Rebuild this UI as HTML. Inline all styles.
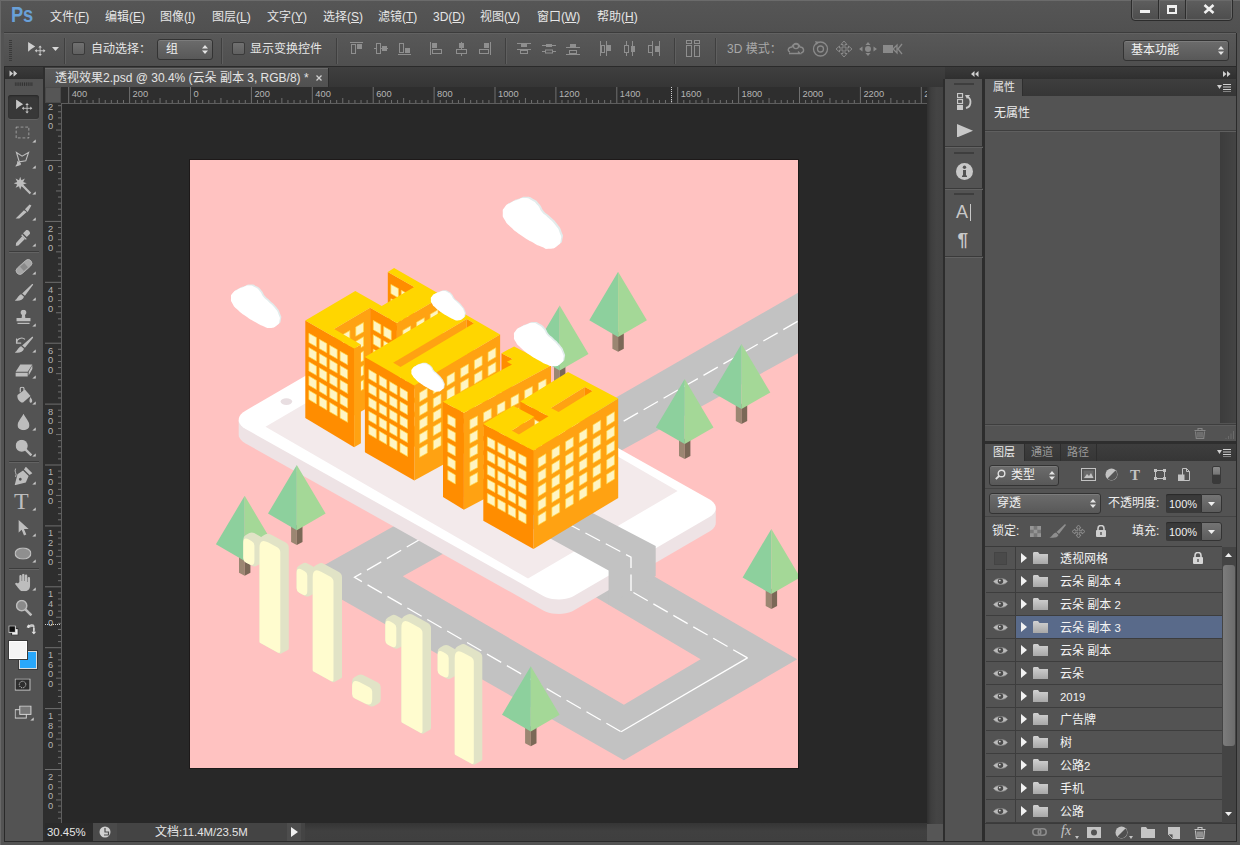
<!DOCTYPE html><html lang="zh"><head><meta charset="utf-8"><title>Photoshop</title><style>
html,body{margin:0;padding:0;background:#535353}
body{width:1240px;height:845px;overflow:hidden;position:relative;font-family:"Liberation Sans","Noto Sans CJK SC",sans-serif}
#app{position:absolute;left:0;top:0;width:1240px;height:845px;overflow:hidden}
.t{position:absolute;white-space:nowrap;line-height:1.34;font-family:"Liberation Sans","Noto Sans CJK SC",sans-serif}
.t u{text-decoration:underline;text-underline-offset:1px}
.la{font-size:.95em}
.rl{font-size:9.3px;color:#b4b4b4;line-height:12px}
</style></head><body><div id="app"><div style="position:absolute;left:0px;top:0px;width:1240px;height:845px;background:#535353;"></div><div style="position:absolute;left:0px;top:0px;width:1240px;height:33px;background:linear-gradient(#565656,#505050);"></div><div style="position:absolute;left:0px;top:0px;width:1240px;height:1px;background:#6b6b6b;"></div><div style="position:absolute;left:0px;top:0px;width:1px;height:845px;background:#686868;"></div><div class="t" style="left:11px;top:2.5px;font-size:21.5px;font-weight:bold;color:#69a0d8;letter-spacing:-0.2px;line-height:24px;transform:scaleX(.85);transform-origin:0 0">Ps</div><div class="t " style="left:50px;top:9px;font-size:12px;color:#e6e6e6;">文件(<u>F</u>)</div><div class="t " style="left:105px;top:9px;font-size:12px;color:#e6e6e6;">编辑(<u>E</u>)</div><div class="t " style="left:160px;top:9px;font-size:12px;color:#e6e6e6;">图像(<u>I</u>)</div><div class="t " style="left:212px;top:9px;font-size:12px;color:#e6e6e6;">图层(<u>L</u>)</div><div class="t " style="left:267px;top:9px;font-size:12px;color:#e6e6e6;">文字(<u>Y</u>)</div><div class="t " style="left:323px;top:9px;font-size:12px;color:#e6e6e6;">选择(<u>S</u>)</div><div class="t " style="left:378px;top:9px;font-size:12px;color:#e6e6e6;">滤镜(<u>T</u>)</div><div class="t " style="left:433px;top:9px;font-size:12px;color:#e6e6e6;">3D(<u>D</u>)</div><div class="t " style="left:480px;top:9px;font-size:12px;color:#e6e6e6;">视图(<u>V</u>)</div><div class="t " style="left:537px;top:9px;font-size:12px;color:#e6e6e6;">窗口(<u>W</u>)</div><div class="t " style="left:597px;top:9px;font-size:12px;color:#e6e6e6;">帮助(<u>H</u>)</div><div style="position:absolute;left:1131px;top:-1px;width:100px;height:20px;border:1px solid #2c2c2c;border-radius:0 0 4px 4px;background:linear-gradient(#5e5e5e,#4d4d4d);box-shadow:inset 0 0 0 1px #6a6a6a"></div><div style="position:absolute;left:1158px;top:0px;width:1px;height:19px;background:#2c2c2c;"></div><div style="position:absolute;left:1159px;top:0px;width:1px;height:19px;background:#686868;"></div><div style="position:absolute;left:1185px;top:0px;width:1px;height:19px;background:#2c2c2c;"></div><div style="position:absolute;left:1186px;top:0px;width:1px;height:19px;background:#686868;"></div><div style="position:absolute;left:1140px;top:10px;width:10px;height:3px;background:#f0f0f0;"></div><div style="position:absolute;left:1167px;top:5px;width:6px;height:4px;border:2px solid #f0f0f0;border-top-width:3px"></div><svg style="position:absolute;left:1203px;top:4px;" width="12" height="10" viewBox="0 0 12 10"><path d="M1.5 1 L10.5 9 M10.5 1 L1.5 9" stroke="#f0f0f0" stroke-width="2.6" fill="none"/></svg><div style="position:absolute;left:4px;top:32px;width:1232px;height:1px;background:#3c3c3c;"></div><div style="position:absolute;left:4px;top:33px;width:1232px;height:1px;background:#626262;"></div><div style="position:absolute;left:4px;top:34px;width:1232px;height:32px;background:linear-gradient(#585858,#4f4f4f);"></div><div style="position:absolute;left:4px;top:66px;width:1232px;height:1px;background:#2a2a2a;"></div><svg style="position:absolute;left:9px;top:40px;" width="4" height="21" viewBox="0 0 4 21"><rect x="0" y="0" width="3" height="1" fill="#3a3a3a"/><rect x="0" y="2" width="3" height="1" fill="#3a3a3a"/><rect x="0" y="4" width="3" height="1" fill="#3a3a3a"/><rect x="0" y="6" width="3" height="1" fill="#3a3a3a"/><rect x="0" y="8" width="3" height="1" fill="#3a3a3a"/><rect x="0" y="10" width="3" height="1" fill="#3a3a3a"/><rect x="0" y="12" width="3" height="1" fill="#3a3a3a"/><rect x="0" y="14" width="3" height="1" fill="#3a3a3a"/><rect x="0" y="16" width="3" height="1" fill="#3a3a3a"/><rect x="0" y="18" width="3" height="1" fill="#3a3a3a"/><rect x="0" y="20" width="3" height="1" fill="#3a3a3a"/></svg><svg style="position:absolute;left:26px;top:41px;" width="22" height="16" viewBox="0 0 22 18"><path d="M1 1 L1 12 L4.2 9.2 L9 6.2 Z" fill="#cfcfcf"/><path d="M14.5 6.5v9M10 11h9" stroke="#cfcfcf" stroke-width="1" fill="none"/><path d="M14.5 5l-2 2.3h4zM14.5 17l-2-2.3h4zM8.5 11l2.3-2v4zM20.5 11l-2.3-2v4z" fill="#cfcfcf"/></svg><svg style="position:absolute;left:52px;top:47px;" width="7" height="4" viewBox="0 0 7 4"><path d="M0 0h7L3.5 4z" fill="#d8d8d8"/></svg><div style="position:absolute;left:64px;top:38px;width:1px;height:26px;background:#3f3f3f;"></div><div style="position:absolute;left:65px;top:38px;width:1px;height:26px;background:#5f5f5f;"></div><div style="position:absolute;left:72px;top:42px;width:11px;height:11px;border:1px solid #3a3a3a;border-radius:2px;background:linear-gradient(#717171,#606060)"></div><div class="t " style="left:91px;top:41px;font-size:12px;color:#e6e6e6;">自动选择：</div><div style="position:absolute;left:157px;top:39px;width:54px;height:19px;border:1px solid #333;border-radius:3px;background:linear-gradient(#6c6c6c,#585858);box-shadow:inset 0 1px 0 #7c7c7c"></div><div class="t " style="left:166px;top:41px;font-size:12px;color:#f0f0f0;">组</div><svg style="position:absolute;left:202px;top:45px;" width="6" height="9" viewBox="0 0 6 9"><path d="M0 3.500L3 0 6 3.500zM0 5.500L3 9 6 5.500z" fill="#e4e4e4"/></svg><div style="position:absolute;left:221px;top:38px;width:1px;height:26px;background:#3f3f3f;"></div><div style="position:absolute;left:222px;top:38px;width:1px;height:26px;background:#5f5f5f;"></div><div style="position:absolute;left:232px;top:42px;width:11px;height:11px;border:1px solid #3a3a3a;border-radius:2px;background:linear-gradient(#717171,#606060)"></div><div class="t " style="left:250px;top:41px;font-size:12px;color:#e6e6e6;">显示变换控件</div><div style="position:absolute;left:336px;top:38px;width:1px;height:26px;background:#3f3f3f;"></div><div style="position:absolute;left:337px;top:38px;width:1px;height:26px;background:#5f5f5f;"></div><svg style="position:absolute;left:350px;top:42px;" width="14" height="14" viewBox="0 0 14 14"><path d="M0 .5h13" stroke="#8f8f8f"/><rect x="1.5" y="2.5" width="4" height="9" fill="none" stroke="#8f8f8f"/><rect x="7" y="2" width="5" height="5" fill="#8f8f8f"/></svg><svg style="position:absolute;left:374px;top:42px;" width="14" height="14" viewBox="0 0 14 14"><path d="M0 6.5h14" stroke="#8f8f8f"/><rect x="2.5" y="1.5" width="4" height="10" fill="#535353" stroke="#8f8f8f"/><rect x="8" y="4" width="5" height="5" fill="#8f8f8f"/></svg><svg style="position:absolute;left:398px;top:42px;" width="14" height="14" viewBox="0 0 14 14"><path d="M0 12.5h13" stroke="#8f8f8f"/><rect x="1.5" y="1.5" width="4" height="9" fill="none" stroke="#8f8f8f"/><rect x="7" y="6" width="5" height="5" fill="#8f8f8f"/></svg><svg style="position:absolute;left:430px;top:42px;" width="14" height="14" viewBox="0 0 14 14"><path d="M.5 0v13" stroke="#8f8f8f"/><rect x="2" y="1" width="5" height="5" fill="#8f8f8f"/><rect x="2.5" y="7.5" width="9" height="4" fill="none" stroke="#8f8f8f"/></svg><svg style="position:absolute;left:455px;top:42px;" width="14" height="14" viewBox="0 0 14 14"><path d="M6.5 0v14" stroke="#8f8f8f"/><rect x="4" y="1" width="5" height="5" fill="#8f8f8f"/><rect x="1.5" y="7.5" width="10" height="4" fill="#535353" stroke="#8f8f8f"/></svg><svg style="position:absolute;left:478px;top:42px;" width="14" height="14" viewBox="0 0 14 14"><path d="M12.5 0v13" stroke="#8f8f8f"/><rect x="6" y="1" width="5" height="5" fill="#8f8f8f"/><rect x="1.5" y="7.5" width="9" height="4" fill="none" stroke="#8f8f8f"/></svg><div style="position:absolute;left:505px;top:38px;width:1px;height:26px;background:#3f3f3f;"></div><div style="position:absolute;left:506px;top:38px;width:1px;height:26px;background:#5f5f5f;"></div><svg style="position:absolute;left:517px;top:42px;" width="14" height="14" viewBox="0 0 14 14"><path d="M0 1.5h14M0 7.5h14" stroke="#8f8f8f"/><rect x="4" y="2" width="6" height="3" fill="#8f8f8f"/><rect x="3.5" y="8.5" width="7" height="3" fill="none" stroke="#8f8f8f"/></svg><svg style="position:absolute;left:542px;top:42px;" width="14" height="14" viewBox="0 0 14 14"><path d="M0 3.5h14M0 9.5h14" stroke="#8f8f8f"/><rect x="4" y="2" width="6" height="3" fill="#8f8f8f"/><rect x="3.5" y="8" width="7" height="3" fill="#535353" stroke="#8f8f8f"/></svg><svg style="position:absolute;left:566px;top:42px;" width="14" height="14" viewBox="0 0 14 14"><path d="M0 5.5h14M0 12.5h14" stroke="#8f8f8f"/><rect x="4" y="2" width="6" height="3" fill="#8f8f8f"/><rect x="3.5" y="8.5" width="7" height="3" fill="none" stroke="#8f8f8f"/></svg><svg style="position:absolute;left:599px;top:41px;" width="15" height="15" viewBox="0 0 15 15"><path d="M1.5 0v15M7.5 0v15" stroke="#8f8f8f"/><rect x="2" y="4" width="3" height="7" fill="none" stroke="#8f8f8f" transform="translate(.5 .5)"/><rect x="8" y="4" width="4" height="6" fill="#8f8f8f"/></svg><svg style="position:absolute;left:623px;top:41px;" width="15" height="15" viewBox="0 0 15 15"><path d="M3.5 0v15M9.5 0v15" stroke="#8f8f8f"/><rect x="1.5" y="4.5" width="4" height="7" fill="#535353" stroke="#8f8f8f"/><rect x="8" y="5" width="4" height="6" fill="#8f8f8f"/></svg><svg style="position:absolute;left:647px;top:41px;" width="15" height="15" viewBox="0 0 15 15"><path d="M5.5 0v15M12.5 0v15" stroke="#8f8f8f"/><rect x="1.5" y="4.5" width="4" height="7" fill="none" stroke="#8f8f8f"/><rect x="8" y="5" width="4" height="6" fill="#8f8f8f"/></svg><div style="position:absolute;left:674px;top:38px;width:1px;height:26px;background:#3f3f3f;"></div><div style="position:absolute;left:675px;top:38px;width:1px;height:26px;background:#5f5f5f;"></div><svg style="position:absolute;left:686px;top:40px;" width="15" height="18" viewBox="0 0 15 18"><rect x=".5" y=".5" width="5" height="3" fill="none" stroke="#8f8f8f"/><rect x="8.5" y=".5" width="5" height="3" fill="none" stroke="#8f8f8f"/><rect x=".5" y="5.5" width="5" height="11" fill="none" stroke="#8f8f8f"/><rect x="8.5" y="5.5" width="5" height="11" fill="none" stroke="#8f8f8f"/></svg><div style="position:absolute;left:715px;top:38px;width:1px;height:26px;background:#3f3f3f;"></div><div style="position:absolute;left:716px;top:38px;width:1px;height:26px;background:#5f5f5f;"></div><div class="t " style="left:727px;top:41px;font-size:12px;color:#a8a8a8;">3D 模式：</div><svg style="position:absolute;left:787px;top:41px;" width="20" height="15" viewBox="0 0 20 15"><path d="M3 11c-3-1-2-5 2-5 1-4 7-4 8 0 4 0 5 5 1 6M2 12.5h11l-2-2M13 12.5" fill="none" stroke="#8a8a8a" stroke-width="1.4"/><circle cx="9" cy="5" r="2.6" fill="none" stroke="#8a8a8a" stroke-width="1.3"/></svg><svg style="position:absolute;left:812px;top:40px;" width="17" height="17" viewBox="0 0 17 17"><circle cx="8.5" cy="9" r="7" fill="none" stroke="#8a8a8a" stroke-width="1.3"/><circle cx="8.5" cy="9" r="3" fill="none" stroke="#8a8a8a" stroke-width="1.3"/><path d="M3 1l4 1-2.5 3z" fill="#8a8a8a"/></svg><svg style="position:absolute;left:836px;top:41px;" width="16" height="16" viewBox="0 0 16 16"><path d="M8 0l3 3.5H9V7h3.5V5L16 8l-3.5 3V9H9v3.500h2L8 16l-3-3.500h2V9H3.500v2L0 8l3.500-3v2H7V3.500H5z" fill="none" stroke="#8a8a8a" stroke-width="1"/></svg><svg style="position:absolute;left:859px;top:41px;" width="18" height="16" viewBox="0 0 18 16"><path d="M9 1l2.500 3h-5zM9 15l2.500-3h-5zM0 8l3.500-2.500v5zM18 8l-3.500-2.500v5z" fill="#8a8a8a"/><circle cx="9" cy="8" r="3" fill="#8a8a8a"/></svg><svg style="position:absolute;left:883px;top:43px;" width="20" height="12" viewBox="0 0 20 12"><rect x="0" y="2" width="10" height="8" fill="#8a8a8a"/><path d="M10 6l4-4v8zM19 1l-4 5 4 5" fill="none" stroke="#8a8a8a" stroke-width="1.3"/></svg><div style="position:absolute;left:1123px;top:40px;width:104px;height:19px;border:1px solid #333;border-radius:3px;background:linear-gradient(#6c6c6c,#585858);box-shadow:inset 0 1px 0 #7c7c7c"></div><div class="t " style="left:1131px;top:42px;font-size:12px;color:#f0f0f0;">基本功能</div><svg style="position:absolute;left:1218px;top:46px;" width="6" height="9" viewBox="0 0 6 9"><path d="M0 3.500L3 0 6 3.500zM0 5.500L3 9 6 5.500z" fill="#e4e4e4"/></svg><div style="position:absolute;left:4px;top:67px;width:1px;height:774px;background:#2a2a2a;"></div><div style="position:absolute;left:5px;top:67px;width:38px;height:12px;background:linear-gradient(#3b3b3b,#303030);"></div><svg style="position:absolute;left:9px;top:70px;transform:scale(.93);transform-origin:50% 50%;" width="9" height="7" viewBox="0 0 9 7"><path d="M0 0l4 3.5L0 7zM4.500 0l4 3.500-4 3.500z" fill="#cfcfcf"/></svg><div style="position:absolute;left:5px;top:79px;width:38px;height:762px;background:#535353;"></div><div style="position:absolute;left:43px;top:67px;width:2px;height:774px;background:#2e2e2e;"></div><svg style="position:absolute;left:14px;top:82px;transform:scale(.93);transform-origin:50% 50%;" width="20" height="5" viewBox="0 0 20 5"><rect x="0" y="0" width="1" height="4" fill="#2f2f2f"/><rect x="2" y="0" width="1" height="4" fill="#2f2f2f"/><rect x="4" y="0" width="1" height="4" fill="#2f2f2f"/><rect x="6" y="0" width="1" height="4" fill="#2f2f2f"/><rect x="8" y="0" width="1" height="4" fill="#2f2f2f"/><rect x="10" y="0" width="1" height="4" fill="#2f2f2f"/><rect x="12" y="0" width="1" height="4" fill="#2f2f2f"/><rect x="14" y="0" width="1" height="4" fill="#2f2f2f"/><rect x="16" y="0" width="1" height="4" fill="#2f2f2f"/><rect x="18" y="0" width="1" height="4" fill="#2f2f2f"/></svg><div style="position:absolute;left:8px;top:95px;width:31px;height:24px;border-radius:3px;background:#383838;box-shadow:inset 0 1px 2px #262626,0 1px 0 #626262"></div><svg style="position:absolute;left:14px;top:99px;transform:scale(.93);transform-origin:50% 50%;" width="20" height="16" viewBox="0 0 20 17"><path d="M1 0V11l3.200-2.800L9 5.500z" fill="#c6c6c6"/><path d="M13.500 5.500v9M9 10h9" stroke="#c6c6c6" fill="none"/><path d="M13.500 4l-2 2.300h4zM13.500 16l-2-2.300h4zM7.500 10l2.300-2v4zM19.500 10l-2.300-2v4z" fill="#c6c6c6"/></svg><svg style="position:absolute;left:15px;top:126px;transform:scale(.93);transform-origin:50% 50%;" width="15" height="13" viewBox="0 0 15 13"><rect x=".5" y=".5" width="14" height="12" fill="none" stroke="#bdbdbd" stroke-dasharray="3 2"/></svg><svg style="position:absolute;left:32px;top:139px;transform:scale(.93);transform-origin:50% 50%;" width="4" height="4" viewBox="0 0 4 4"><path d="M4 0V4H0z" fill="#c8c8c8"/></svg><svg style="position:absolute;left:14px;top:150px;transform:scale(.93);transform-origin:50% 50%;" width="18" height="18" viewBox="0 0 18 18"><path d="M2 2l6 4 7-4-3 9-7 1zM5 12l-3 4 4-1z" fill="none" stroke="#bdbdbd" stroke-width="1.200"/><path d="M3 11l-1 6 5-3z" fill="#bdbdbd"/></svg><svg style="position:absolute;left:32px;top:165px;transform:scale(.93);transform-origin:50% 50%;" width="4" height="4" viewBox="0 0 4 4"><path d="M4 0V4H0z" fill="#c8c8c8"/></svg><svg style="position:absolute;left:13px;top:176px;transform:scale(.93);transform-origin:50% 50%;" width="20" height="20" viewBox="0 0 20 20"><path d="M9 9l9 9" stroke="#bdbdbd" stroke-width="2.400"/><path d="M7 0l1.300 3.800L12 2l-1.800 3.700L14 7l-3.800 1.300L12 12l-3.700-1.800L7 14l-1.300-3.800L2 12l1.800-3.700L0 7l3.800-1.300L2 2l3.700 1.800z" fill="#bdbdbd"/><circle cx="7" cy="7" r="3" fill="#bdbdbd"/></svg><svg style="position:absolute;left:32px;top:191px;transform:scale(.93);transform-origin:50% 50%;" width="4" height="4" viewBox="0 0 4 4"><path d="M4 0V4H0z" fill="#c8c8c8"/></svg><svg style="position:absolute;left:14px;top:203px;transform:scale(.93);transform-origin:50% 50%;" width="19" height="18" viewBox="0 0 19 18"><path d="M1 16l9-9 3 2-8 7zM11 6l5-5 2 1-4 7z" fill="#bdbdbd"/></svg><svg style="position:absolute;left:32px;top:217px;transform:scale(.93);transform-origin:50% 50%;" width="4" height="4" viewBox="0 0 4 4"><path d="M4 0V4H0z" fill="#c8c8c8"/></svg><svg style="position:absolute;left:15px;top:229px;transform:scale(.93);transform-origin:50% 50%;" width="17" height="18" viewBox="0 0 17 18"><path d="M11 1c2-2 6 2 4 4l-3 3-4-4zM7 5l5 5-1 1-5-5zM7 7l3 3-7 7-3 .500.500-3z" fill="#bdbdbd"/></svg><svg style="position:absolute;left:32px;top:243px;transform:scale(.93);transform-origin:50% 50%;" width="4" height="4" viewBox="0 0 4 4"><path d="M4 0V4H0z" fill="#c8c8c8"/></svg><div style="position:absolute;left:9px;top:251px;width:30px;height:1px;background:#3c3c3c;"></div><div style="position:absolute;left:9px;top:252px;width:30px;height:1px;background:#636363;"></div><svg style="position:absolute;left:14px;top:258px;transform:scale(.93);transform-origin:50% 50%;" width="20" height="18" viewBox="0 0 20 18"><rect x="0" y="5" width="20" height="8" rx="4" fill="#a6a6a6" stroke="#bdbdbd" stroke-width=".8" transform="rotate(-42 10 9)"/><rect x="7" y="6" width="6" height="6" fill="#8a8a8a" transform="rotate(-42 10 9)"/></svg><svg style="position:absolute;left:32px;top:271px;transform:scale(.93);transform-origin:50% 50%;" width="4" height="4" viewBox="0 0 4 4"><path d="M4 0V4H0z" fill="#c8c8c8"/></svg><svg style="position:absolute;left:14px;top:283px;transform:scale(.93);transform-origin:50% 50%;" width="20" height="19" viewBox="0 0 20 19"><path d="M19 0l1 1-9 12-3-2.500zM7 11.500l3 2.500c-1 4-6 5-10 4 3-1 3-5 7-6.500z" fill="#bdbdbd"/></svg><svg style="position:absolute;left:32px;top:297px;transform:scale(.93);transform-origin:50% 50%;" width="4" height="4" viewBox="0 0 4 4"><path d="M4 0V4H0z" fill="#c8c8c8"/></svg><svg style="position:absolute;left:15px;top:309px;transform:scale(.93);transform-origin:50% 50%;" width="17" height="18" viewBox="0 0 17 18"><circle cx="8.500" cy="3" r="3" fill="#bdbdbd"/><path d="M7 5h3l.5 4H16v3.500H1V9h5.500zM2 14h13v1.500H2z" fill="#bdbdbd"/></svg><svg style="position:absolute;left:32px;top:323px;transform:scale(.93);transform-origin:50% 50%;" width="4" height="4" viewBox="0 0 4 4"><path d="M4 0V4H0z" fill="#c8c8c8"/></svg><svg style="position:absolute;left:14px;top:335px;transform:scale(.93);transform-origin:50% 50%;" width="20" height="19" viewBox="0 0 20 19"><path d="M19 1l1 1-9 11-3-2.500zM7 11.500l3 2.500c-1 4-6 5-10 4 3-1 3-5 7-6.500z" fill="#bdbdbd"/><path d="M2 8c0-5 6-7 9-4M2 3v5h5" fill="none" stroke="#bdbdbd" stroke-width="1.300"/></svg><svg style="position:absolute;left:32px;top:349px;transform:scale(.93);transform-origin:50% 50%;" width="4" height="4" viewBox="0 0 4 4"><path d="M4 0V4H0z" fill="#c8c8c8"/></svg><svg style="position:absolute;left:14px;top:362px;transform:scale(.93);transform-origin:50% 50%;" width="20" height="16" viewBox="0 0 20 16"><path d="M6 2h13l-5 8H1zM1 11h13v4H1zM15 10l4-7v4l-4 7z" fill="#bdbdbd"/></svg><svg style="position:absolute;left:32px;top:375px;transform:scale(.93);transform-origin:50% 50%;" width="4" height="4" viewBox="0 0 4 4"><path d="M4 0V4H0z" fill="#c8c8c8"/></svg><svg style="position:absolute;left:14px;top:386px;transform:scale(.93);transform-origin:50% 50%;" width="20" height="19" viewBox="0 0 20 19"><path d="M3 9l8-6 6 7-8 7c-3 1-7-4-6-8z" fill="#bdbdbd"/><path d="M6 6V2c0-2 4-2 4 0v5" fill="none" stroke="#bdbdbd" stroke-width="1.300"/><path d="M17 11c1 2 3 4 1 6-2 1-3-2-1-6z" fill="#bdbdbd"/></svg><svg style="position:absolute;left:32px;top:401px;transform:scale(.93);transform-origin:50% 50%;" width="4" height="4" viewBox="0 0 4 4"><path d="M4 0V4H0z" fill="#c8c8c8"/></svg><svg style="position:absolute;left:17px;top:413px;transform:scale(.93);transform-origin:50% 50%;" width="13" height="18" viewBox="0 0 13 18"><path d="M6.500 0C9 5 13 9 13 12.500a6.500 5.500 0 0 1-13 0C0 9 4 5 6.500 0z" fill="#bdbdbd"/></svg><svg style="position:absolute;left:32px;top:427px;transform:scale(.93);transform-origin:50% 50%;" width="4" height="4" viewBox="0 0 4 4"><path d="M4 0V4H0z" fill="#c8c8c8"/></svg><svg style="position:absolute;left:15px;top:439px;transform:scale(.93);transform-origin:50% 50%;" width="18" height="18" viewBox="0 0 18 18"><circle cx="6.500" cy="6.500" r="6.500" fill="#bdbdbd"/><path d="M10 10l7 7" stroke="#bdbdbd" stroke-width="2.600"/></svg><svg style="position:absolute;left:32px;top:453px;transform:scale(.93);transform-origin:50% 50%;" width="4" height="4" viewBox="0 0 4 4"><path d="M4 0V4H0z" fill="#c8c8c8"/></svg><div style="position:absolute;left:9px;top:461px;width:30px;height:1px;background:#3c3c3c;"></div><div style="position:absolute;left:9px;top:462px;width:30px;height:1px;background:#636363;"></div><svg style="position:absolute;left:13px;top:466px;transform:scale(.93);transform-origin:50% 50%;" width="21" height="20" viewBox="0 0 21 20"><path d="M13 0l7 7-3 2-6-6zM10 4l6 6-3 7-12 3 3-12zM7 12a1.500 1.500 0 1 0 .1 0z" fill="#bdbdbd" fill-rule="evenodd"/><path d="M2 2c-2 4 2 5 0 9" fill="none" stroke="#bdbdbd"/></svg><svg style="position:absolute;left:32px;top:481px;transform:scale(.93);transform-origin:50% 50%;" width="4" height="4" viewBox="0 0 4 4"><path d="M4 0V4H0z" fill="#c8c8c8"/></svg><div class="t" style="left:14px;top:489px;font-size:24px;line-height:24px;font-family:'Liberation Serif',serif;color:#bdbdbd">T</div><svg style="position:absolute;left:32px;top:507px;transform:scale(.93);transform-origin:50% 50%;" width="4" height="4" viewBox="0 0 4 4"><path d="M4 0V4H0z" fill="#c8c8c8"/></svg><svg style="position:absolute;left:18px;top:519px;transform:scale(.93);transform-origin:50% 50%;" width="12" height="18" viewBox="0 0 12 18"><path d="M0 0v14l3.500-3 2.500 6 2.500-1-2.500-6h5z" fill="#bdbdbd"/></svg><svg style="position:absolute;left:32px;top:533px;transform:scale(.93);transform-origin:50% 50%;" width="4" height="4" viewBox="0 0 4 4"><path d="M4 0V4H0z" fill="#c8c8c8"/></svg><svg style="position:absolute;left:14px;top:547px;transform:scale(.93);transform-origin:50% 50%;" width="18" height="13" viewBox="0 0 18 13"><ellipse cx="9" cy="6.500" rx="8.500" ry="6" fill="#8f8f8f" stroke="#bdbdbd" stroke-width="1.500"/></svg><svg style="position:absolute;left:32px;top:559px;transform:scale(.93);transform-origin:50% 50%;" width="4" height="4" viewBox="0 0 4 4"><path d="M4 0V4H0z" fill="#c8c8c8"/></svg><div style="position:absolute;left:9px;top:568px;width:30px;height:1px;background:#3c3c3c;"></div><div style="position:absolute;left:9px;top:569px;width:30px;height:1px;background:#636363;"></div><svg style="position:absolute;left:14px;top:573px;transform:scale(.93);transform-origin:50% 50%;" width="20" height="19" viewBox="0 0 20 19"><path d="M5 9V3c0-2 2.500-2 2.500 0v5h.500V1.500c0-2 2.500-2 2.500 0V8h.500V2.500c0-2 2.500-2 2.500 0V9h.500V5c0-2 2.500-2 2.500 0v8c0 4-3 6-6 6H9c-3 0-4-2-8-7-1.500-2 1-3 2.500-1.500z" fill="#bdbdbd"/></svg><svg style="position:absolute;left:32px;top:587px;transform:scale(.93);transform-origin:50% 50%;" width="4" height="4" viewBox="0 0 4 4"><path d="M4 0V4H0z" fill="#c8c8c8"/></svg><svg style="position:absolute;left:15px;top:599px;transform:scale(.93);transform-origin:50% 50%;" width="18" height="18" viewBox="0 0 18 18"><circle cx="6.500" cy="6.500" r="5.500" fill="#8a8a8a" stroke="#bdbdbd" stroke-width="1.600"/><path d="M10.500 10.500l6.500 6.500" stroke="#bdbdbd" stroke-width="2.800"/></svg><svg style="position:absolute;left:8px;top:625px;transform:scale(.93);transform-origin:50% 50%;" width="11" height="11" viewBox="0 0 11 11"><rect x="3.500" y="3.500" width="7" height="7" fill="#eee" stroke="#222"/><rect x=".5" y=".5" width="7" height="7" fill="#111" stroke="#ddd"/></svg><svg style="position:absolute;left:26px;top:623px;transform:scale(.93);transform-origin:50% 50%;" width="12" height="12" viewBox="0 0 12 12"><path d="M2 5c0-3 3-4 6-3M8 10V5" fill="none" stroke="#ddd" stroke-width="1.400"/><path d="M0 4.500L2 1l2.500 3.500zM5.500 9L8 12l2.500-3z" fill="#ddd"/><path d="M3 3h5v5" fill="none" stroke="#ddd" stroke-width="1.300"/></svg><div style="position:absolute;left:19px;top:651px;width:16px;height:16px;background:#2aa8fb;border:1px solid #dcdcdc;box-shadow:0 0 0 1px #3a3a3a"></div><div style="position:absolute;left:9px;top:641px;width:16px;height:16px;background:#f4f4f4;border:1px solid #fff;box-shadow:0 0 0 1px #3a3a3a"></div><svg style="position:absolute;left:14px;top:678px;transform:scale(.93);transform-origin:50% 50%;" width="18" height="14" viewBox="0 0 18 14"><rect x=".5" y=".5" width="16" height="12" fill="#2e2e2e" stroke="#ccc"/><circle cx="8.500" cy="6.500" r="3.500" fill="none" stroke="#eee" stroke-dasharray="1 1"/></svg><svg style="position:absolute;left:14px;top:705px;transform:scale(.93);transform-origin:50% 50%;" width="19" height="15" viewBox="0 0 19 15"><rect x=".5" y="4.500" width="12" height="9" fill="#555" stroke="#ddd"/><rect x="5.500" y=".5" width="12" height="9" fill="#777" stroke="#ddd"/></svg><svg style="position:absolute;left:30px;top:717px;transform:scale(.93);transform-origin:50% 50%;" width="4" height="4" viewBox="0 0 4 4"><path d="M4 0V4H0z" fill="#c8c8c8"/></svg><div style="position:absolute;left:45px;top:67px;width:900px;height:20px;background:linear-gradient(#3f3f3f,#353535);"></div><div style="position:absolute;left:45px;top:68px;width:283px;height:19px;background:linear-gradient(#5a5a5a,#505050);border-right:1px solid #2c2c2c;box-shadow:inset 0 1px 0 #6a6a6a"></div><div class="t " style="left:55px;top:69.5px;font-size:12px;color:#e4e4e4;">透视效果2.psd @ 30.4% (云朵 副本 3, RGB/8) *</div><svg style="position:absolute;left:315.5px;top:74.5px;" width="6" height="6" viewBox="0 0 6 6"><path d="M.5.5l5 5M5.500.5l-5 5" stroke="#d0d0d0" stroke-width="1.250"/></svg><div style="position:absolute;left:45px;top:87px;width:882px;height:17px;background:#2e2e2e;"></div><div style="position:absolute;left:45px;top:104px;width:17px;height:719px;background:#2e2e2e;"></div><div style="position:absolute;left:45px;top:87px;width:16px;height:16px;background:#565656;box-shadow:inset 0 0 0 1px #4a4a4a"></div><div style="position:absolute;left:61px;top:103px;width:866px;height:1px;background:#5e5e5e;"></div><div style="position:absolute;left:61px;top:103px;width:1px;height:720px;background:#5e5e5e;"></div><div style="position:absolute;left:62px;top:104px;width:865px;height:719px;background:#282828;"></div><svg style="position:absolute;left:45px;top:87px;" width="882" height="16" viewBox="0 0 882 16"><g fill="#6f6f6f"><rect x="23.20" y="0" width="1" height="16"/><rect x="29.29" y="13" width="1" height="3"/><rect x="35.38" y="13" width="1" height="3"/><rect x="41.47" y="13" width="1" height="3"/><rect x="47.56" y="13" width="1" height="3"/><rect x="53.65" y="11" width="1" height="5"/><rect x="59.74" y="13" width="1" height="3"/><rect x="65.83" y="13" width="1" height="3"/><rect x="71.92" y="13" width="1" height="3"/><rect x="78.01" y="13" width="1" height="3"/><rect x="84.10" y="0" width="1" height="16"/><rect x="90.19" y="13" width="1" height="3"/><rect x="96.28" y="13" width="1" height="3"/><rect x="102.37" y="13" width="1" height="3"/><rect x="108.46" y="13" width="1" height="3"/><rect x="114.55" y="11" width="1" height="5"/><rect x="120.64" y="13" width="1" height="3"/><rect x="126.73" y="13" width="1" height="3"/><rect x="132.82" y="13" width="1" height="3"/><rect x="138.91" y="13" width="1" height="3"/><rect x="145.00" y="0" width="1" height="16"/><rect x="151.09" y="13" width="1" height="3"/><rect x="157.18" y="13" width="1" height="3"/><rect x="163.27" y="13" width="1" height="3"/><rect x="169.36" y="13" width="1" height="3"/><rect x="175.45" y="11" width="1" height="5"/><rect x="181.54" y="13" width="1" height="3"/><rect x="187.63" y="13" width="1" height="3"/><rect x="193.72" y="13" width="1" height="3"/><rect x="199.81" y="13" width="1" height="3"/><rect x="205.90" y="0" width="1" height="16"/><rect x="211.99" y="13" width="1" height="3"/><rect x="218.08" y="13" width="1" height="3"/><rect x="224.17" y="13" width="1" height="3"/><rect x="230.26" y="13" width="1" height="3"/><rect x="236.35" y="11" width="1" height="5"/><rect x="242.44" y="13" width="1" height="3"/><rect x="248.53" y="13" width="1" height="3"/><rect x="254.62" y="13" width="1" height="3"/><rect x="260.71" y="13" width="1" height="3"/><rect x="266.80" y="0" width="1" height="16"/><rect x="272.89" y="13" width="1" height="3"/><rect x="278.98" y="13" width="1" height="3"/><rect x="285.07" y="13" width="1" height="3"/><rect x="291.16" y="13" width="1" height="3"/><rect x="297.25" y="11" width="1" height="5"/><rect x="303.34" y="13" width="1" height="3"/><rect x="309.43" y="13" width="1" height="3"/><rect x="315.52" y="13" width="1" height="3"/><rect x="321.61" y="13" width="1" height="3"/><rect x="327.70" y="0" width="1" height="16"/><rect x="333.79" y="13" width="1" height="3"/><rect x="339.88" y="13" width="1" height="3"/><rect x="345.97" y="13" width="1" height="3"/><rect x="352.06" y="13" width="1" height="3"/><rect x="358.15" y="11" width="1" height="5"/><rect x="364.24" y="13" width="1" height="3"/><rect x="370.33" y="13" width="1" height="3"/><rect x="376.42" y="13" width="1" height="3"/><rect x="382.51" y="13" width="1" height="3"/><rect x="388.60" y="0" width="1" height="16"/><rect x="394.69" y="13" width="1" height="3"/><rect x="400.78" y="13" width="1" height="3"/><rect x="406.87" y="13" width="1" height="3"/><rect x="412.96" y="13" width="1" height="3"/><rect x="419.05" y="11" width="1" height="5"/><rect x="425.14" y="13" width="1" height="3"/><rect x="431.23" y="13" width="1" height="3"/><rect x="437.32" y="13" width="1" height="3"/><rect x="443.41" y="13" width="1" height="3"/><rect x="449.50" y="0" width="1" height="16"/><rect x="455.59" y="13" width="1" height="3"/><rect x="461.68" y="13" width="1" height="3"/><rect x="467.77" y="13" width="1" height="3"/><rect x="473.86" y="13" width="1" height="3"/><rect x="479.95" y="11" width="1" height="5"/><rect x="486.04" y="13" width="1" height="3"/><rect x="492.13" y="13" width="1" height="3"/><rect x="498.22" y="13" width="1" height="3"/><rect x="504.31" y="13" width="1" height="3"/><rect x="510.40" y="0" width="1" height="16"/><rect x="516.49" y="13" width="1" height="3"/><rect x="522.58" y="13" width="1" height="3"/><rect x="528.67" y="13" width="1" height="3"/><rect x="534.76" y="13" width="1" height="3"/><rect x="540.85" y="11" width="1" height="5"/><rect x="546.94" y="13" width="1" height="3"/><rect x="553.03" y="13" width="1" height="3"/><rect x="559.12" y="13" width="1" height="3"/><rect x="565.21" y="13" width="1" height="3"/><rect x="571.30" y="0" width="1" height="16"/><rect x="577.39" y="13" width="1" height="3"/><rect x="583.48" y="13" width="1" height="3"/><rect x="589.57" y="13" width="1" height="3"/><rect x="595.66" y="13" width="1" height="3"/><rect x="601.75" y="11" width="1" height="5"/><rect x="607.84" y="13" width="1" height="3"/><rect x="613.93" y="13" width="1" height="3"/><rect x="620.02" y="13" width="1" height="3"/><rect x="626.11" y="13" width="1" height="3"/><rect x="632.20" y="0" width="1" height="16"/><rect x="638.29" y="13" width="1" height="3"/><rect x="644.38" y="13" width="1" height="3"/><rect x="650.47" y="13" width="1" height="3"/><rect x="656.56" y="13" width="1" height="3"/><rect x="662.65" y="11" width="1" height="5"/><rect x="668.74" y="13" width="1" height="3"/><rect x="674.83" y="13" width="1" height="3"/><rect x="680.92" y="13" width="1" height="3"/><rect x="687.01" y="13" width="1" height="3"/><rect x="693.10" y="0" width="1" height="16"/><rect x="699.19" y="13" width="1" height="3"/><rect x="705.28" y="13" width="1" height="3"/><rect x="711.37" y="13" width="1" height="3"/><rect x="717.46" y="13" width="1" height="3"/><rect x="723.55" y="11" width="1" height="5"/><rect x="729.64" y="13" width="1" height="3"/><rect x="735.73" y="13" width="1" height="3"/><rect x="741.82" y="13" width="1" height="3"/><rect x="747.91" y="13" width="1" height="3"/><rect x="754.00" y="0" width="1" height="16"/><rect x="760.09" y="13" width="1" height="3"/><rect x="766.18" y="13" width="1" height="3"/><rect x="772.27" y="13" width="1" height="3"/><rect x="778.36" y="13" width="1" height="3"/><rect x="784.45" y="11" width="1" height="5"/><rect x="790.54" y="13" width="1" height="3"/><rect x="796.63" y="13" width="1" height="3"/><rect x="802.72" y="13" width="1" height="3"/><rect x="808.81" y="13" width="1" height="3"/><rect x="814.90" y="0" width="1" height="16"/><rect x="820.99" y="13" width="1" height="3"/><rect x="827.08" y="13" width="1" height="3"/><rect x="833.17" y="13" width="1" height="3"/><rect x="839.26" y="13" width="1" height="3"/><rect x="845.35" y="11" width="1" height="5"/><rect x="851.44" y="13" width="1" height="3"/><rect x="857.53" y="13" width="1" height="3"/><rect x="863.62" y="13" width="1" height="3"/><rect x="869.71" y="13" width="1" height="3"/><rect x="875.80" y="0" width="1" height="16"/></g></svg><div class="t rl" style="left:71.7px;top:87.5px">400</div><div class="t rl" style="left:132.6px;top:87.5px">200</div><div class="t rl" style="left:193.5px;top:87.5px">0</div><div class="t rl" style="left:254.4px;top:87.5px">200</div><div class="t rl" style="left:315.3px;top:87.5px">400</div><div class="t rl" style="left:376.2px;top:87.5px">600</div><div class="t rl" style="left:437.1px;top:87.5px">800</div><div class="t rl" style="left:498.0px;top:87.5px">1000</div><div class="t rl" style="left:558.9px;top:87.5px">1200</div><div class="t rl" style="left:619.8px;top:87.5px">1400</div><div class="t rl" style="left:680.7px;top:87.5px">1600</div><div class="t rl" style="left:741.6px;top:87.5px">1800</div><div class="t rl" style="left:802.5px;top:87.5px">2000</div><div class="t rl" style="left:863.4px;top:87.5px">2200</div><div class="t rl" style="left:924.3px;top:87.5px">2</div><svg style="position:absolute;left:45px;top:104px;" width="16" height="719" viewBox="0 0 16 719"><g fill="#6f6f6f"><rect x="13" y="1.19" width="3" height="1"/><rect x="13" y="7.28" width="3" height="1"/><rect x="13" y="13.37" width="3" height="1"/><rect x="13" y="19.46" width="3" height="1"/><rect x="11" y="25.55" width="5" height="1"/><rect x="13" y="31.64" width="3" height="1"/><rect x="13" y="37.73" width="3" height="1"/><rect x="13" y="43.82" width="3" height="1"/><rect x="13" y="49.91" width="3" height="1"/><rect x="0" y="56.00" width="16" height="1"/><rect x="13" y="62.09" width="3" height="1"/><rect x="13" y="68.18" width="3" height="1"/><rect x="13" y="74.27" width="3" height="1"/><rect x="13" y="80.36" width="3" height="1"/><rect x="11" y="86.45" width="5" height="1"/><rect x="13" y="92.54" width="3" height="1"/><rect x="13" y="98.63" width="3" height="1"/><rect x="13" y="104.72" width="3" height="1"/><rect x="13" y="110.81" width="3" height="1"/><rect x="0" y="116.90" width="16" height="1"/><rect x="13" y="122.99" width="3" height="1"/><rect x="13" y="129.08" width="3" height="1"/><rect x="13" y="135.17" width="3" height="1"/><rect x="13" y="141.26" width="3" height="1"/><rect x="11" y="147.35" width="5" height="1"/><rect x="13" y="153.44" width="3" height="1"/><rect x="13" y="159.53" width="3" height="1"/><rect x="13" y="165.62" width="3" height="1"/><rect x="13" y="171.71" width="3" height="1"/><rect x="0" y="177.80" width="16" height="1"/><rect x="13" y="183.89" width="3" height="1"/><rect x="13" y="189.98" width="3" height="1"/><rect x="13" y="196.07" width="3" height="1"/><rect x="13" y="202.16" width="3" height="1"/><rect x="11" y="208.25" width="5" height="1"/><rect x="13" y="214.34" width="3" height="1"/><rect x="13" y="220.43" width="3" height="1"/><rect x="13" y="226.52" width="3" height="1"/><rect x="13" y="232.61" width="3" height="1"/><rect x="0" y="238.70" width="16" height="1"/><rect x="13" y="244.79" width="3" height="1"/><rect x="13" y="250.88" width="3" height="1"/><rect x="13" y="256.97" width="3" height="1"/><rect x="13" y="263.06" width="3" height="1"/><rect x="11" y="269.15" width="5" height="1"/><rect x="13" y="275.24" width="3" height="1"/><rect x="13" y="281.33" width="3" height="1"/><rect x="13" y="287.42" width="3" height="1"/><rect x="13" y="293.51" width="3" height="1"/><rect x="0" y="299.60" width="16" height="1"/><rect x="13" y="305.69" width="3" height="1"/><rect x="13" y="311.78" width="3" height="1"/><rect x="13" y="317.87" width="3" height="1"/><rect x="13" y="323.96" width="3" height="1"/><rect x="11" y="330.05" width="5" height="1"/><rect x="13" y="336.14" width="3" height="1"/><rect x="13" y="342.23" width="3" height="1"/><rect x="13" y="348.32" width="3" height="1"/><rect x="13" y="354.41" width="3" height="1"/><rect x="0" y="360.50" width="16" height="1"/><rect x="13" y="366.59" width="3" height="1"/><rect x="13" y="372.68" width="3" height="1"/><rect x="13" y="378.77" width="3" height="1"/><rect x="13" y="384.86" width="3" height="1"/><rect x="11" y="390.95" width="5" height="1"/><rect x="13" y="397.04" width="3" height="1"/><rect x="13" y="403.13" width="3" height="1"/><rect x="13" y="409.22" width="3" height="1"/><rect x="13" y="415.31" width="3" height="1"/><rect x="0" y="421.40" width="16" height="1"/><rect x="13" y="427.49" width="3" height="1"/><rect x="13" y="433.58" width="3" height="1"/><rect x="13" y="439.67" width="3" height="1"/><rect x="13" y="445.76" width="3" height="1"/><rect x="11" y="451.85" width="5" height="1"/><rect x="13" y="457.94" width="3" height="1"/><rect x="13" y="464.03" width="3" height="1"/><rect x="13" y="470.12" width="3" height="1"/><rect x="13" y="476.21" width="3" height="1"/><rect x="0" y="482.30" width="16" height="1"/><rect x="13" y="488.39" width="3" height="1"/><rect x="13" y="494.48" width="3" height="1"/><rect x="13" y="500.57" width="3" height="1"/><rect x="13" y="506.66" width="3" height="1"/><rect x="11" y="512.75" width="5" height="1"/><rect x="13" y="518.84" width="3" height="1"/><rect x="13" y="524.93" width="3" height="1"/><rect x="13" y="531.02" width="3" height="1"/><rect x="13" y="537.11" width="3" height="1"/><rect x="0" y="543.20" width="16" height="1"/><rect x="13" y="549.29" width="3" height="1"/><rect x="13" y="555.38" width="3" height="1"/><rect x="13" y="561.47" width="3" height="1"/><rect x="13" y="567.56" width="3" height="1"/><rect x="11" y="573.65" width="5" height="1"/><rect x="13" y="579.74" width="3" height="1"/><rect x="13" y="585.83" width="3" height="1"/><rect x="13" y="591.92" width="3" height="1"/><rect x="13" y="598.01" width="3" height="1"/><rect x="0" y="604.10" width="16" height="1"/><rect x="13" y="610.19" width="3" height="1"/><rect x="13" y="616.28" width="3" height="1"/><rect x="13" y="622.37" width="3" height="1"/><rect x="13" y="628.46" width="3" height="1"/><rect x="11" y="634.55" width="5" height="1"/><rect x="13" y="640.64" width="3" height="1"/><rect x="13" y="646.73" width="3" height="1"/><rect x="13" y="652.82" width="3" height="1"/><rect x="13" y="658.91" width="3" height="1"/><rect x="0" y="665.00" width="16" height="1"/><rect x="13" y="671.09" width="3" height="1"/><rect x="13" y="677.18" width="3" height="1"/><rect x="13" y="683.27" width="3" height="1"/><rect x="13" y="689.36" width="3" height="1"/><rect x="11" y="695.45" width="5" height="1"/><rect x="13" y="701.54" width="3" height="1"/><rect x="13" y="707.63" width="3" height="1"/><rect x="13" y="713.72" width="3" height="1"/></g></svg><div class="t rl" style="left:46px;top:101.0px;width:9px;text-align:center">2</div><div class="t rl" style="left:46px;top:110.6px;width:9px;text-align:center">0</div><div class="t rl" style="left:46px;top:120.2px;width:9px;text-align:center">0</div><div class="t rl" style="left:46px;top:161.9px;width:9px;text-align:center">0</div><div class="t rl" style="left:46px;top:222.8px;width:9px;text-align:center">2</div><div class="t rl" style="left:46px;top:232.4px;width:9px;text-align:center">0</div><div class="t rl" style="left:46px;top:242.0px;width:9px;text-align:center">0</div><div class="t rl" style="left:46px;top:283.7px;width:9px;text-align:center">4</div><div class="t rl" style="left:46px;top:293.3px;width:9px;text-align:center">0</div><div class="t rl" style="left:46px;top:302.9px;width:9px;text-align:center">0</div><div class="t rl" style="left:46px;top:344.6px;width:9px;text-align:center">6</div><div class="t rl" style="left:46px;top:354.2px;width:9px;text-align:center">0</div><div class="t rl" style="left:46px;top:363.8px;width:9px;text-align:center">0</div><div class="t rl" style="left:46px;top:405.5px;width:9px;text-align:center">8</div><div class="t rl" style="left:46px;top:415.1px;width:9px;text-align:center">0</div><div class="t rl" style="left:46px;top:424.7px;width:9px;text-align:center">0</div><div class="t rl" style="left:46px;top:466.4px;width:9px;text-align:center">1</div><div class="t rl" style="left:46px;top:476.0px;width:9px;text-align:center">0</div><div class="t rl" style="left:46px;top:485.6px;width:9px;text-align:center">0</div><div class="t rl" style="left:46px;top:495.2px;width:9px;text-align:center">0</div><div class="t rl" style="left:46px;top:527.3px;width:9px;text-align:center">1</div><div class="t rl" style="left:46px;top:536.9px;width:9px;text-align:center">2</div><div class="t rl" style="left:46px;top:546.5px;width:9px;text-align:center">0</div><div class="t rl" style="left:46px;top:556.1px;width:9px;text-align:center">0</div><div class="t rl" style="left:46px;top:588.2px;width:9px;text-align:center">1</div><div class="t rl" style="left:46px;top:597.8px;width:9px;text-align:center">4</div><div class="t rl" style="left:46px;top:607.4px;width:9px;text-align:center">0</div><div class="t rl" style="left:46px;top:617.0px;width:9px;text-align:center">0</div><div class="t rl" style="left:46px;top:649.1px;width:9px;text-align:center">1</div><div class="t rl" style="left:46px;top:658.7px;width:9px;text-align:center">6</div><div class="t rl" style="left:46px;top:668.3px;width:9px;text-align:center">0</div><div class="t rl" style="left:46px;top:677.9px;width:9px;text-align:center">0</div><div class="t rl" style="left:46px;top:710.0px;width:9px;text-align:center">1</div><div class="t rl" style="left:46px;top:719.6px;width:9px;text-align:center">8</div><div class="t rl" style="left:46px;top:729.2px;width:9px;text-align:center">0</div><div class="t rl" style="left:46px;top:738.8px;width:9px;text-align:center">0</div><div class="t rl" style="left:46px;top:770.9px;width:9px;text-align:center">2</div><div class="t rl" style="left:46px;top:780.5px;width:9px;text-align:center">0</div><div class="t rl" style="left:46px;top:790.1px;width:9px;text-align:center">0</div><div class="t rl" style="left:46px;top:799.7px;width:9px;text-align:center">0</div><svg style="position:absolute;left:671px;top:87px;" width="1" height="16" viewBox="0 0 1 16"><path d="M.5 0v16" stroke="#cfcfcf" stroke-dasharray="1 1"/></svg><svg style="position:absolute;left:45px;top:624px;" width="16" height="1" viewBox="0 0 16 1"><path d="M0 .5h16" stroke="#cfcfcf" stroke-dasharray="1 1"/></svg><div style="position:absolute;left:927px;top:87px;width:16px;height:737px;background:linear-gradient(90deg,#303030,#3e3e3e 25%,#444 60%,#434343);"></div><div style="position:absolute;left:943px;top:79px;width:2px;height:762px;background:#2d2d2d;"></div><div style="position:absolute;left:45px;top:823px;width:882px;height:18px;background:linear-gradient(#353535,#404040 45%,#3f3f3f);"></div><div style="position:absolute;left:45px;top:823px;width:48px;height:18px;background:#2b2b2b;"></div><div class="t " style="left:47px;top:824.5px;font-size:11.4px;color:#e6e6e6;">30.45%</div><div style="position:absolute;left:93px;top:823px;width:24px;height:18px;background:#4a4a4a;"></div><svg style="position:absolute;left:99px;top:826px;" width="12" height="12" viewBox="0 0 12 12"><circle cx="6" cy="6" r="5.500" fill="#cfcfcf"/><path d="M6 2v4h3.500v3H5" fill="none" stroke="#4a4a4a" stroke-width="1.200"/></svg><div style="position:absolute;left:117px;top:823px;width:188px;height:18px;background:#444;"></div><div class="t " style="left:155px;top:824px;font-size:12px;color:#e6e6e6;">文档<span class="la">:11.4M/23.5M</span></div><div style="position:absolute;left:287px;top:823px;width:14px;height:18px;background:#4d4d4d;"></div><svg style="position:absolute;left:291px;top:827px;" width="7" height="10" viewBox="0 0 7 10"><path d="M0 0l7 5-7 5z" fill="#f0f0f0"/></svg><div style="position:absolute;left:927px;top:824px;width:16px;height:17px;background:#565656;"></div><div style="position:absolute;left:4px;top:841px;width:1232px;height:1px;background:#2a2a2a;"></div><div style="position:absolute;left:189px;top:159px;width:610px;height:610px;background:#1d1919"></div><svg style="position:absolute;left:190px;top:160px" width="608" height="608" viewBox="190 160 608 608"><rect x="190" y="160" width="608" height="608" fill="#ffc2c1"/><polygon points="560,429.8 798.5,292.5 798.5,353 560,484.2" fill="#c2c2c2"/><path d="M450 494.7 L302.6 577.2 L623.9 760.2 L797.2 659.3 L600 545ZM470 538.7 L402.8 576.3 L623.9 704.8 L700.6 659.3 L560 576Z" fill="#c2c2c2" fill-rule="evenodd"/><g stroke="#fff" stroke-width="1.3" fill="none"><path d="M797.6 321.4L600 434.7" stroke-dasharray="16.5 6.5"/><path d="M440 527.8L354.5 577.3L621.1 731.8" stroke-dasharray="16.5 6.5" stroke-dashoffset="1.1"/><path d="M621.1 731.8L747.5 657.9" /><path d="M747.5 657.9L631 591.1" stroke-dasharray="16.5 6.5"/></g><polygon points="238.7,419.9 238.7,434.4 238.9,436.4 239.8,438.3 241.1,440.1 242.9,441.8 245.2,443.3 543.3,610.4 545.9,611.7 548.9,612.7 552.1,613.4 555.5,613.8 559,614 562.4,613.8 565.8,613.3 569,612.5 571.9,611.4 574.6,610.1 709.4,531.6 711.7,530 713.5,528.3 714.8,526.5 715.6,524.6 715.8,522.6 715.8,508.1" fill="#eee3e5"/><polygon points="245.1,410.9 242.8,412.5 241,414.2 239.7,416 238.9,417.9 238.7,419.9 238.9,421.9 239.8,423.8 241.1,425.6 242.9,427.3 245.2,428.8 543.3,595.9 545.9,597.2 548.9,598.2 552.1,598.9 555.5,599.3 559,599.5 562.4,599.3 565.8,598.8 569,598 571.9,596.9 574.6,595.6 709.4,517.1 711.7,515.5 713.5,513.8 714.8,512 715.6,510.1 715.8,508.1 715.6,506.1 714.7,504.2 713.4,502.4 711.6,500.7 709.3,499.2 411.2,332.1 408.6,330.8 405.6,329.8 402.4,329.1 399,328.7 395.5,328.5 392.1,328.7 388.7,329.2 385.5,330 382.6,331.1 379.9,332.4" fill="#ffffff"/><polygon points="265.5,426.8 415.1,339.3 677.6,491 528,578.5" fill="#f3eaeb"/><ellipse cx="286.4" cy="401.6" rx="5.8" ry="3.4" fill="#e8dee1"/><polygon points="560,496 655.7,546 655.7,576 608.6,605 608.6,570.5 520,521.8" fill="#c2c2c2"/><g stroke="#fff" stroke-width="1.3" fill="none"><path d="M631 591.1L631 557.2L560 519.5" stroke-dasharray="16.5 6.5"/></g><polygon points="612.4,328.9 618.1,331.9 618.1,351.7 612.4,348.7" fill="#9b8672"/><polygon points="623.8,328.9 618.1,331.9 618.1,351.7 623.8,348.7" fill="#7b6857"/><polygon points="618.1,271.7 589.3,320.2 618.1,336.9" fill="#8dd09d"/><polygon points="618.1,271.7 646.9,320.2 618.1,336.9" fill="#a4d897"/><polygon points="554,362.6 559.7,365.6 559.7,385.4 554,382.4" fill="#9b8672"/><polygon points="565.4,362.6 559.7,365.6 559.7,385.4 565.4,382.4" fill="#7b6857"/><polygon points="559.7,305.4 530.9,353.9 559.7,370.6" fill="#8dd09d"/><polygon points="559.7,305.4 588.5,353.9 559.7,370.6" fill="#a4d897"/><polygon points="679,436.1 684.7,439.1 684.7,458.9 679,455.9" fill="#9b8672"/><polygon points="690.4,436.1 684.7,439.1 684.7,458.9 690.4,455.9" fill="#7b6857"/><polygon points="684.7,378.9 655.9,427.4 684.7,444.1" fill="#8dd09d"/><polygon points="684.7,378.9 713.5,427.4 684.7,444.1" fill="#a4d897"/><polygon points="735.8,401.1 741.5,404.1 741.5,423.9 735.8,420.9" fill="#9b8672"/><polygon points="747.2,401.1 741.5,404.1 741.5,423.9 747.2,420.9" fill="#7b6857"/><polygon points="741.5,343.9 712.7,392.4 741.5,409.1" fill="#8dd09d"/><polygon points="741.5,343.9 770.3,392.4 741.5,409.1" fill="#a4d897"/><polygon points="765.7,586.1 771.4,589.1 771.4,608.9 765.7,605.9" fill="#9b8672"/><polygon points="777.1,586.1 771.4,589.1 771.4,608.9 777.1,605.9" fill="#7b6857"/><polygon points="771.4,528.9 742.6,577.4 771.4,594.1" fill="#8dd09d"/><polygon points="771.4,528.9 800.2,577.4 771.4,594.1" fill="#a4d897"/><polygon points="291.1,522.2 296.8,525.2 296.8,545 291.1,542" fill="#9b8672"/><polygon points="302.5,522.2 296.8,525.2 296.8,545 302.5,542" fill="#7b6857"/><polygon points="296.8,465 268,513.5 296.8,530.2" fill="#8dd09d"/><polygon points="296.8,465 325.6,513.5 296.8,530.2" fill="#a4d897"/><polygon points="239,553 244.7,556 244.7,575.8 239,572.8" fill="#9b8672"/><polygon points="250.4,553 244.7,556 244.7,575.8 250.4,572.8" fill="#7b6857"/><polygon points="244.7,495.8 215.9,544.3 244.7,561" fill="#8dd09d"/><polygon points="244.7,495.8 273.5,544.3 244.7,561" fill="#a4d897"/><polygon points="525.1,723.4 530.8,726.4 530.8,746.2 525.1,743.2" fill="#9b8672"/><polygon points="536.5,723.4 530.8,726.4 530.8,746.2 536.5,743.2" fill="#7b6857"/><polygon points="530.8,666.2 502,714.7 530.8,731.4" fill="#8dd09d"/><polygon points="530.8,666.2 559.6,714.7 530.8,731.4" fill="#a4d897"/><path d="M437.6 651.9Q437.6 649 440.2 647.6L443.7 645.6Q446.1 644.3 448.5 645.6L454.6 649Q457.2 650.4 457.2 653.4L457.2 672Q457.2 674.9 454.6 676.3L451.1 678.3Q448.7 679.6 446.3 678.3L440.2 674.9Q437.6 673.5 437.6 670.5Z" fill="#e1e3c6"/><path d="M437.6 655.3Q437.6 649 443.1 652.1L446.1 653.7Q448.7 655.1 448.7 658.1L448.7 673.3Q448.7 679.6 443.1 676.6L440.2 674.9Q437.6 673.5 437.6 670.5Z" fill="#fffccf"/><path d="M454.7 651.5Q454.7 648 457.8 646.3L460.3 644.9Q463.2 643.3 466.1 644.9L479.2 652.1Q482.3 653.8 482.3 657.4L482.3 759.2Q482.3 760.3 481.4 760.8L474.7 764.5Q473.8 765 472.9 764.5L455.6 755Q454.7 754.5 454.7 753.4Z" fill="#e1e3c6"/><path d="M454.7 658.1Q454.7 648 463.6 652.9L470.7 656.8Q473.8 658.5 473.8 662.1L473.8 762Q473.8 765 471.1 763.5L455.6 755Q454.7 754.5 454.7 753.4Z" fill="#fffccf"/><path d="M385.3 621.7Q385.3 618.8 387.9 617.4L391.4 615.4Q393.8 614.1 396.2 615.4L402.2 618.7Q404.8 620.1 404.8 623.1L404.8 641.7Q404.8 644.6 402.2 646.1L398.7 648Q396.3 649.3 393.9 648L387.9 644.7Q385.3 643.3 385.3 640.3Z" fill="#e1e3c6"/><path d="M385.3 625.1Q385.3 618.8 390.8 621.8L393.7 623.4Q396.3 624.8 396.3 627.8L396.3 643.1Q396.3 649.3 390.8 646.3L387.9 644.7Q385.3 643.3 385.3 640.3Z" fill="#fffccf"/><path d="M401.4 621.3Q401.4 617.8 404.5 616.1L407 614.7Q409.9 613.1 412.8 614.7L427.9 623Q431 624.7 431 628.3L431 728.1Q431 729.2 430.1 729.7L423.4 733.4Q422.5 733.9 421.6 733.4L402.3 722.8Q401.4 722.3 401.4 721.2Z" fill="#e1e3c6"/><path d="M401.4 627.9Q401.4 617.8 410.3 622.7L419.4 627.7Q422.5 629.4 422.5 633L422.5 730.9Q422.5 733.9 419.8 732.4L402.3 722.8Q401.4 722.3 401.4 721.2Z" fill="#fffccf"/><path d="M352.1 681.4Q352.1 678.5 354.7 677.1L358.3 675.1Q360.6 673.8 363 675L377.9 682.5Q380.7 683.8 380.7 686.9L380.7 699.4Q380.7 702.3 378.1 703.8L374.5 705.8Q372.2 707 369.8 705.9L354.9 698.4Q352.1 697 352.1 693.9Z" fill="#e1e3c6"/><path d="M352.1 686.6Q352.1 678.5 359.3 682.1L369.4 687.2Q372.2 688.5 372.2 691.6L372.2 699Q372.2 707 365 703.4L354.9 698.4Q352.1 697 352.1 693.9Z" fill="#fffccf"/><path d="M296.6 569.7Q296.6 566.8 299.2 565.4L302.7 563.4Q305.1 562.1 307.5 563.4L313.2 566.6Q315.8 568 315.8 570.9L315.8 589.5Q315.8 592.5 313.2 593.9L309.7 595.9Q307.3 597.2 304.9 595.9L299.2 592.7Q296.6 591.3 296.6 588.3Z" fill="#e1e3c6"/><path d="M296.6 572.9Q296.6 566.8 302 569.7L304.7 571.3Q307.3 572.7 307.3 575.6L307.3 591.1Q307.3 597.2 302 594.2L299.2 592.7Q296.6 591.3 296.6 588.3Z" fill="#fffccf"/><path d="M312.7 570.5Q312.7 567 315.8 565.3L318.3 563.9Q321.2 562.3 324.1 563.9L338.9 572Q342 573.7 342 577.3L342 676.7Q342 677.7 341.1 678.3L334.4 682Q333.5 682.4 332.6 682L313.6 671.5Q312.7 671 312.7 669.9Z" fill="#e1e3c6"/><path d="M312.7 577.1Q312.7 567 321.6 571.9L330.4 576.7Q333.5 578.4 333.5 582L333.5 679.4Q333.5 682.4 330.8 681L313.6 671.5Q312.7 671 312.7 669.9Z" fill="#fffccf"/><path d="M243.3 539.4Q243.3 536.5 245.9 535.1L249.4 533.1Q251.8 531.8 254.2 533.1L260.3 536.5Q262.9 537.9 262.9 540.9L262.9 559.5Q262.9 562.4 260.3 563.8L256.8 565.8Q254.4 567.1 252 565.8L245.9 562.4Q243.3 561 243.3 558Z" fill="#e1e3c6"/><path d="M243.3 542.8Q243.3 536.5 248.9 539.6L251.8 541.2Q254.4 542.6 254.4 545.6L254.4 560.8Q254.4 567.1 248.9 564.1L245.9 562.4Q243.3 561 243.3 558Z" fill="#fffccf"/><path d="M259.5 541.1Q259.5 537.6 262.6 535.9L265.1 534.5Q268 532.9 270.9 534.5L285.7 542.6Q288.8 544.3 288.8 547.9L288.8 648.3Q288.8 649.3 287.9 649.9L281.2 653.6Q280.3 654 279.4 653.6L260.4 643.1Q259.5 642.6 259.5 641.5Z" fill="#e1e3c6"/><path d="M259.5 547.7Q259.5 537.6 268.4 542.5L277.2 547.3Q280.3 549 280.3 552.6L280.3 651Q280.3 654 277.6 652.6L260.4 643.1Q259.5 642.6 259.5 641.5Z" fill="#fffccf"/><polygon points="387.8,271.9 414.2,286.9 414.2,385.8 387.8,370" fill="#ff8d00"/><path d="M390.9 284.4 L398.4 288.6 L398.4 297.9 L390.9 293.6ZM390.9 298.7 L398.4 303 L398.4 312.2 L390.9 307.9ZM390.9 313 L398.4 317.4 L398.4 326.6 L390.9 322.2ZM390.9 327.3 L398.4 331.7 L398.4 340.9 L390.9 336.5ZM390.9 341.7 L398.4 346.1 L398.4 355.3 L390.9 350.9ZM401.3 290.3 L408.8 294.6 L408.8 303.9 L401.3 299.5ZM401.3 304.7 L408.8 309 L408.8 318.2 L401.3 313.9ZM401.3 319 L408.8 323.4 L408.8 332.6 L401.3 328.3ZM401.3 333.4 L408.8 337.8 L408.8 347 L401.3 342.6ZM401.3 347.8 L408.8 352.2 L408.8 361.4 L401.3 357Z" fill="#fff5c4" stroke="#ffd84a" stroke-width=".7"/><polygon points="396.9,323.1 442.9,295.9 442.9,395.4 396.9,422.3" fill="#ffa212"/><path d="M402.9 330.4 L410.6 325.9 L410.6 335.2 L402.9 339.7ZM402.9 344.9 L410.6 340.4 L410.6 349.7 L402.9 354.2ZM402.9 359.4 L410.6 354.8 L410.6 364.1 L402.9 368.7ZM402.9 373.8 L410.6 369.3 L410.6 378.6 L402.9 383.1ZM402.9 388.3 L410.6 383.8 L410.6 393.1 L402.9 397.6ZM416.6 322.3 L424.3 317.8 L424.3 327.1 L416.6 331.6ZM416.6 336.8 L424.3 332.3 L424.3 341.6 L416.6 346.1ZM416.6 351.3 L424.3 346.8 L424.3 356.1 L416.6 360.6ZM416.6 365.8 L424.3 361.3 L424.3 370.6 L416.6 375.1ZM416.6 380.3 L424.3 375.8 L424.3 385.1 L416.6 389.6ZM430.3 314.3 L438 309.7 L438 319 L430.3 323.6ZM430.3 328.8 L438 324.2 L438 333.5 L430.3 338.1ZM430.3 343.3 L438 338.7 L438 348.1 L430.3 352.6ZM430.3 357.7 L438 353.2 L438 362.6 L430.3 367.1ZM430.3 372.2 L438 367.7 L438 377.1 L430.3 381.6Z" fill="#fff5c4" stroke="#ffd84a" stroke-width=".7"/><polygon points="370.1,307.8 396.9,323.1 396.9,422.3 370.1,406.3" fill="#ff8d00"/><path d="M373.3 320.4 L380.8 324.7 L380.8 334 L373.3 329.7ZM373.3 334.8 L380.8 339.1 L380.8 348.4 L373.3 344ZM373.3 349.2 L380.8 353.5 L380.8 362.8 L373.3 358.4ZM373.3 363.5 L380.8 367.9 L380.8 377.2 L373.3 372.8ZM373.3 377.9 L380.8 382.3 L380.8 391.6 L373.3 387.1ZM383.7 326.4 L391.2 330.7 L391.2 340 L383.7 335.7ZM383.7 340.8 L391.2 345.1 L391.2 354.4 L383.7 350.1ZM383.7 355.2 L391.2 359.6 L391.2 368.8 L383.7 364.5ZM383.7 369.6 L391.2 374 L391.2 383.3 L383.7 378.9ZM383.7 384 L391.2 388.4 L391.2 397.7 L383.7 393.3Z" fill="#fff5c4" stroke="#ffd84a" stroke-width=".7"/><polygon points="334.1,329.1 370.1,307.8 370.1,406.3 334.1,427.3" fill="#ffa212"/><path d="M342.1 335.1 L349.8 330.6 L349.8 339.8 L342.1 344.3ZM342.1 349.4 L349.8 344.9 L349.8 354.1 L342.1 358.6ZM342.1 363.8 L349.8 359.2 L349.8 368.4 L342.1 373ZM342.1 378.1 L349.8 373.6 L349.8 382.8 L342.1 387.3ZM342.1 392.4 L349.8 387.9 L349.8 397.1 L342.1 401.6ZM355.8 327 L363.5 322.5 L363.5 331.7 L355.8 336.2ZM355.8 341.4 L363.5 336.8 L363.5 346.1 L355.8 350.6ZM355.8 355.7 L363.5 351.2 L363.5 360.4 L355.8 364.9ZM355.8 370 L363.5 365.5 L363.5 374.7 L355.8 379.3ZM355.8 384.4 L363.5 379.9 L363.5 389.1 L355.8 393.6Z" fill="#fff5c4" stroke="#ffd84a" stroke-width=".7"/><polygon points="305.3,320.6 354.1,348.4 354.1,447.2 305.3,418.1" fill="#ff8d00"/><path d="M308.9 333.3 L316.4 337.6 L316.4 346.8 L308.9 342.5ZM308.9 347.6 L316.4 351.9 L316.4 361.1 L308.9 356.7ZM308.9 361.8 L316.4 366.2 L316.4 375.3 L308.9 371ZM308.9 376 L316.4 380.4 L316.4 389.6 L308.9 385.2ZM308.9 390.3 L316.4 394.7 L316.4 403.9 L308.9 399.4ZM319.3 339.3 L326.8 343.6 L326.8 352.8 L319.3 348.5ZM319.3 353.6 L326.8 357.9 L326.8 367.1 L319.3 362.7ZM319.3 367.8 L326.8 372.2 L326.8 381.4 L319.3 377ZM319.3 382.1 L326.8 386.5 L326.8 395.7 L319.3 391.3ZM319.3 396.4 L326.8 400.8 L326.8 410 L319.3 405.6ZM329.7 345.3 L337.2 349.6 L337.2 358.8 L329.7 354.5ZM329.7 359.6 L337.2 363.9 L337.2 373.1 L329.7 368.8ZM329.7 373.9 L337.2 378.2 L337.2 387.5 L329.7 383.1ZM329.7 388.2 L337.2 392.6 L337.2 401.8 L329.7 397.4ZM329.7 402.5 L337.2 406.9 L337.2 416.1 L329.7 411.7ZM340.1 351.2 L347.6 355.5 L347.6 364.8 L340.1 360.4ZM340.1 365.6 L347.6 369.9 L347.6 379.1 L340.1 374.8ZM340.1 379.9 L347.6 384.3 L347.6 393.5 L340.1 389.1ZM340.1 394.3 L347.6 398.7 L347.6 407.9 L340.1 403.5ZM340.1 408.6 L347.6 413 L347.6 422.3 L340.1 417.9Z" fill="#fff5c4" stroke="#ffd84a" stroke-width=".7"/><polygon points="354.1,348.4 360.9,344.4 360.9,443.2 354.1,447.2" fill="#ffa212"/><path d="M305.3 320.6 L354.1 348.4 L360.9 344.4 L334.1 329.1 L370.1 307.8 L396.9 323.1 L442.9 295.9 L394.1 268.1 L387.8 271.9 L414.2 286.9 L381.7 306.1 L355.3 291.1Z" fill="#ffd600" fill-rule="evenodd"/><polygon points="466.7,319 473.9,323.2 473.9,422.1 466.7,417.9" fill="#ff8d00"/><polygon points="393.3,362.7 466.7,319 466.7,417.9 393.3,458.3" fill="#ffa212"/><path d="M399.3 369.6 L407 365.1 L407 374.1 L399.3 378.6ZM399.3 383.6 L407 379.1 L407 388.1 L399.3 392.6ZM399.3 397.6 L407 393.1 L407 402.2 L399.3 406.6ZM399.3 411.6 L407 407.2 L407 416.2 L399.3 420.5ZM399.3 425.5 L407 421.2 L407 430.2 L399.3 434.5ZM413 361.5 L420.7 357 L420.7 366.1 L413 370.6ZM413 375.6 L420.7 371.1 L420.7 380.2 L413 384.6ZM413 389.7 L420.7 385.2 L420.7 394.3 L413 398.7ZM413 403.7 L420.7 399.3 L420.7 408.4 L413 412.8ZM413 417.8 L420.7 413.5 L420.7 422.5 L413 426.9ZM426.7 353.4 L434.4 348.9 L434.4 358 L426.7 362.5ZM426.7 367.6 L434.4 363.1 L434.4 372.2 L426.7 376.7ZM426.7 381.8 L434.4 377.3 L434.4 386.5 L426.7 390.9ZM426.7 395.9 L434.4 391.5 L434.4 400.7 L426.7 405ZM426.7 410.1 L434.4 405.7 L434.4 414.9 L426.7 419.2ZM440.4 345.4 L448.1 340.8 L448.1 350 L440.4 354.5ZM440.4 359.6 L448.1 355.1 L448.1 364.3 L440.4 368.8ZM440.4 373.9 L448.1 369.4 L448.1 378.6 L440.4 383ZM440.4 388.1 L448.1 383.7 L448.1 392.9 L440.4 397.3ZM440.4 402.4 L448.1 398 L448.1 407.2 L440.4 411.5ZM454.1 337.3 L461.8 332.7 L461.8 342 L454.1 346.5ZM454.1 351.6 L461.8 347.1 L461.8 356.4 L454.1 360.8ZM454.1 365.9 L461.8 361.5 L461.8 370.8 L454.1 375.2ZM454.1 380.3 L461.8 375.9 L461.8 385.1 L454.1 389.5ZM454.1 394.6 L461.8 390.3 L461.8 399.5 L454.1 403.8Z" fill="#fff5c4" stroke="#ffd84a" stroke-width=".7"/><polygon points="414.3,385.5 500.1,334.4 500.1,433.4 414.3,480.6" fill="#ffa212"/><path d="M419.6 392.8 L427.3 388.2 L427.3 397.2 L419.6 401.7ZM419.6 406.7 L427.3 402.2 L427.3 411.2 L419.6 415.6ZM419.6 420.6 L427.3 416.1 L427.3 425.1 L419.6 429.5ZM419.6 434.5 L427.3 430.1 L427.3 439.1 L419.6 443.4ZM419.6 448.4 L427.3 444.1 L427.3 453 L419.6 457.3ZM433.3 384.7 L441 380.1 L441 389.2 L433.3 393.7ZM433.3 398.7 L441 394.2 L441 403.2 L433.3 407.7ZM433.3 412.7 L441 408.2 L441 417.3 L433.3 421.7ZM433.3 426.7 L441 422.3 L441 431.3 L433.3 435.7ZM433.3 440.7 L441 436.3 L441 445.4 L433.3 449.7ZM447 376.6 L454.7 372.1 L454.7 381.1 L447 385.7ZM447 390.7 L454.7 386.2 L454.7 395.3 L447 399.7ZM447 404.8 L454.7 400.3 L454.7 409.4 L447 413.8ZM447 418.9 L454.7 414.5 L454.7 423.6 L447 427.9ZM447 432.9 L454.7 428.6 L454.7 437.7 L447 442ZM460.7 368.5 L468.4 364 L468.4 373.1 L460.7 377.6ZM460.7 382.7 L468.4 378.2 L468.4 387.3 L460.7 391.8ZM460.7 396.9 L468.4 392.4 L468.4 401.6 L460.7 406ZM460.7 411 L468.4 406.6 L468.4 415.8 L460.7 420.2ZM460.7 425.2 L468.4 420.9 L468.4 430 L460.7 434.3ZM474.4 360.4 L482.1 355.9 L482.1 365.1 L474.4 369.6ZM474.4 374.7 L482.1 370.2 L482.1 379.4 L474.4 383.9ZM474.4 389 L482.1 384.5 L482.1 393.7 L474.4 398.1ZM474.4 403.2 L482.1 398.8 L482.1 408 L474.4 412.4ZM474.4 417.5 L482.1 413.1 L482.1 422.3 L474.4 426.7ZM488.1 352.3 L495.8 347.8 L495.8 357 L488.1 361.6ZM488.1 366.7 L495.8 362.2 L495.8 371.5 L488.1 375.9ZM488.1 381 L495.8 376.6 L495.8 385.9 L488.1 390.3ZM488.1 395.4 L495.8 391 L495.8 400.3 L488.1 404.6ZM488.1 409.8 L495.8 405.4 L495.8 414.7 L488.1 419Z" fill="#fff5c4" stroke="#ffd84a" stroke-width=".7"/><polygon points="364.9,357 414.3,385.5 414.3,480.6 364.9,452.2" fill="#ff8d00"/><path d="M368.8 369.6 L376.3 374 L376.3 382.9 L368.8 378.6ZM368.8 383.5 L376.3 387.8 L376.3 396.8 L368.8 392.4ZM368.8 397.4 L376.3 401.7 L376.3 410.6 L368.8 406.3ZM368.8 411.3 L376.3 415.6 L376.3 424.5 L368.8 420.2ZM368.8 425.2 L376.3 429.5 L376.3 438.4 L368.8 434.1ZM379.2 375.6 L386.7 380 L386.7 388.9 L379.2 384.6ZM379.2 389.5 L386.7 393.8 L386.7 402.8 L379.2 398.4ZM379.2 403.4 L386.7 407.7 L386.7 416.6 L379.2 412.3ZM379.2 417.3 L386.7 421.6 L386.7 430.5 L379.2 426.2ZM379.2 431.1 L386.7 435.5 L386.7 444.4 L379.2 440.1ZM389.6 381.6 L397.1 386 L397.1 394.9 L389.6 390.5ZM389.6 395.5 L397.1 399.8 L397.1 408.7 L389.6 404.4ZM389.6 409.4 L397.1 413.7 L397.1 422.6 L389.6 418.3ZM389.6 423.3 L397.1 427.6 L397.1 436.5 L389.6 432.2ZM389.6 437.1 L397.1 441.4 L397.1 450.4 L389.6 446.1ZM400 387.6 L407.5 392 L407.5 400.9 L400 396.5ZM400 401.5 L407.5 405.8 L407.5 414.7 L400 410.4ZM400 415.4 L407.5 419.7 L407.5 428.6 L400 424.3ZM400 429.2 L407.5 433.6 L407.5 442.5 L400 438.2ZM400 443.1 L407.5 447.4 L407.5 456.4 L400 452Z" fill="#fff5c4" stroke="#ffd84a" stroke-width=".7"/><path d="M364.9 357 L414.3 385.5 L500.1 334.4 L450.7 305.9ZM393.3 362.7 L400.5 366.9 L473.9 323.2 L466.7 319Z" fill="#ffd600" fill-rule="evenodd"/><polygon points="501.5,353.2 512.4,358.9 512.4,454.6 501.5,448" fill="#ff8d00"/><polygon points="506.9,361.8 512,364.5 512,460.6 506.9,457.5" fill="#ff8d00"/><polygon points="463.9,412.7 551,365.6 551,463.6 463.9,509.7" fill="#ffa212"/><path d="M469.9 420.1 L477.6 415.9 L477.6 425 L469.9 429.2ZM469.9 434.2 L477.6 430.1 L477.6 439.2 L469.9 443.3ZM469.9 448.4 L477.6 444.3 L477.6 453.4 L469.9 457.5ZM469.9 462.5 L477.6 458.4 L477.6 467.5 L469.9 471.6ZM469.9 476.7 L477.6 472.6 L477.6 481.7 L469.9 485.8ZM483.6 412.7 L491.3 408.5 L491.3 417.7 L483.6 421.8ZM483.6 426.9 L491.3 422.7 L491.3 431.8 L483.6 436ZM483.6 441 L491.3 436.9 L491.3 446 L483.6 450.2ZM483.6 455.2 L491.3 451.1 L491.3 460.2 L483.6 464.3ZM483.6 469.4 L491.3 465.3 L491.3 474.4 L483.6 478.5ZM497.3 405.3 L505 401.1 L505 410.3 L497.3 414.4ZM497.3 419.5 L505 415.4 L505 424.5 L497.3 428.6ZM497.3 433.7 L505 429.6 L505 438.7 L497.3 442.8ZM497.3 447.9 L505 443.8 L505 452.9 L497.3 457ZM497.3 462.1 L505 458 L505 467.1 L497.3 471.2ZM511 397.9 L518.7 393.7 L518.7 402.9 L511 407ZM511 412.1 L518.7 408 L518.7 417.1 L511 421.3ZM511 426.4 L518.7 422.2 L518.7 431.4 L511 435.5ZM511 440.6 L518.7 436.5 L518.7 445.6 L511 449.7ZM511 454.8 L518.7 450.7 L518.7 459.9 L511 463.9ZM524.7 390.5 L532.4 386.4 L532.4 395.5 L524.7 399.7ZM524.7 404.8 L532.4 400.6 L532.4 409.8 L524.7 413.9ZM524.7 419 L532.4 414.9 L532.4 424 L524.7 428.2ZM524.7 433.3 L532.4 429.1 L532.4 438.3 L524.7 442.4ZM524.7 447.5 L532.4 443.4 L532.4 452.6 L524.7 456.7ZM538.4 383.1 L546.1 379 L546.1 388.1 L538.4 392.3ZM538.4 397.4 L546.1 393.2 L546.1 402.4 L538.4 406.6ZM538.4 411.7 L546.1 407.5 L546.1 416.7 L538.4 420.8ZM538.4 425.9 L546.1 421.8 L546.1 431 L538.4 435.1ZM538.4 440.2 L546.1 436.1 L546.1 445.3 L538.4 449.4Z" fill="#fff5c4" stroke="#ffd84a" stroke-width=".7"/><polygon points="443,401.8 463.9,412.7 463.9,509.7 443,497.1" fill="#ff8d00"/><path d="M447.8 414.8 L455.3 418.8 L455.3 427.8 L447.8 423.8ZM447.8 428.7 L455.3 432.8 L455.3 441.8 L447.8 437.7ZM447.8 442.7 L455.3 446.8 L455.3 455.9 L447.8 451.7ZM447.8 456.6 L455.3 460.9 L455.3 469.9 L447.8 465.6ZM447.8 470.6 L455.3 474.9 L455.3 484 L447.8 479.6Z" fill="#fff5c4" stroke="#ffd84a" stroke-width=".7"/><path d="M443 401.8 L463.9 412.7 L551 365.6 L514.1 346.4 L501.5 353.2 L512.4 358.9 L506.9 361.8 L512 364.5Z" fill="#ffd600" fill-rule="evenodd"/><polygon points="584.9,387.1 592.5,391.1 592.5,489.8 584.9,485.5" fill="#ff8d00"/><polygon points="551,407.9 584.9,387.1 584.9,485.5 551,505.9" fill="#ffa212"/><path d="M557.9 414.4 L565.6 409.7 L565.6 418.9 L557.9 423.6ZM557.9 428.7 L565.6 424 L565.6 433.2 L557.9 437.9ZM557.9 443 L565.6 438.3 L565.6 447.5 L557.9 452.2ZM557.9 457.3 L565.6 452.6 L565.6 461.8 L557.9 466.5ZM557.9 471.6 L565.6 467 L565.6 476.2 L557.9 480.8ZM571.6 406 L579.3 401.3 L579.3 410.5 L571.6 415.2ZM571.6 420.3 L579.3 415.6 L579.3 424.9 L571.6 429.5ZM571.6 434.7 L579.3 430 L579.3 439.2 L571.6 443.9ZM571.6 449 L579.3 444.3 L579.3 453.5 L571.6 458.2ZM571.6 463.3 L579.3 458.7 L579.3 467.9 L571.6 472.5Z" fill="#fff5c4" stroke="#ffd84a" stroke-width=".7"/><polygon points="520.3,401.4 548.5,416.3 548.5,514.4 520.3,498.6" fill="#ff8d00"/><path d="M524 414 L531.5 418 L531.5 427.1 L524 423.1ZM524 428.2 L531.5 432.2 L531.5 441.3 L524 437.3ZM524 442.4 L531.5 446.4 L531.5 455.6 L524 451.5ZM524 456.6 L531.5 460.6 L531.5 469.8 L524 465.7ZM524 470.7 L531.5 474.9 L531.5 484 L524 479.9ZM534.4 419.5 L541.9 423.5 L541.9 432.7 L534.4 428.7ZM534.4 433.7 L541.9 437.8 L541.9 446.9 L534.4 442.9ZM534.4 448 L541.9 452 L541.9 461.2 L534.4 457.1ZM534.4 462.2 L541.9 466.3 L541.9 475.5 L534.4 471.4ZM534.4 476.5 L541.9 480.6 L541.9 489.8 L534.4 485.6Z" fill="#fff5c4" stroke="#ffd84a" stroke-width=".7"/><polygon points="511.7,430.6 534.3,416.8 534.3,514.5 511.7,528.1" fill="#ffa212"/><path d="M519.9 436.3 L527.6 431.6 L527.6 440.7 L519.9 445.4ZM519.9 450.5 L527.6 445.8 L527.6 455 L519.9 459.7ZM519.9 464.7 L527.6 460.1 L527.6 469.2 L519.9 473.9ZM519.9 479 L527.6 474.3 L527.6 483.5 L519.9 488.1ZM519.9 493.2 L527.6 488.5 L527.6 497.7 L519.9 502.3Z" fill="#fff5c4" stroke="#ffd84a" stroke-width=".7"/><polygon points="533.5,450.6 618.2,398.6 618.2,498 533.5,548.9" fill="#ffa212"/><path d="M538.2 458.5 L545.9 453.8 L545.9 463 L538.2 467.7ZM538.2 472.8 L545.9 468.1 L545.9 477.4 L538.2 482.1ZM538.2 487.2 L545.9 482.5 L545.9 491.7 L538.2 496.4ZM538.2 501.5 L545.9 496.8 L545.9 506.1 L538.2 510.7ZM538.2 515.9 L545.9 511.2 L545.9 520.4 L538.2 525.1ZM551.9 450.1 L559.6 445.4 L559.6 454.6 L551.9 459.3ZM551.9 464.5 L559.6 459.8 L559.6 469 L551.9 473.7ZM551.9 478.8 L559.6 474.1 L559.6 483.4 L551.9 488.1ZM551.9 493.2 L559.6 488.5 L559.6 497.8 L551.9 502.4ZM551.9 507.6 L559.6 502.9 L559.6 512.2 L551.9 516.8ZM565.6 441.7 L573.3 437 L573.3 446.3 L565.6 451ZM565.6 456.1 L573.3 451.4 L573.3 460.7 L565.6 465.4ZM565.6 470.5 L573.3 465.8 L573.3 475.1 L565.6 479.8ZM565.6 484.9 L573.3 480.2 L573.3 489.5 L565.6 494.1ZM565.6 499.3 L573.3 494.6 L573.3 503.9 L565.6 508.5ZM579.3 433.3 L587 428.6 L587 437.9 L579.3 442.6ZM579.3 447.7 L587 443 L587 452.3 L579.3 457ZM579.3 462.2 L587 457.5 L587 466.8 L579.3 471.4ZM579.3 476.6 L587 471.9 L587 481.2 L579.3 485.9ZM579.3 491 L587 486.3 L587 495.6 L579.3 500.3ZM593 424.9 L600.7 420.2 L600.7 429.5 L593 434.2ZM593 439.4 L600.7 434.7 L600.7 444 L593 448.7ZM593 453.8 L600.7 449.1 L600.7 458.4 L593 463.1ZM593 468.3 L600.7 463.6 L600.7 472.9 L593 477.6ZM593 482.7 L600.7 478.1 L600.7 487.4 L593 492ZM606.7 416.5 L614.4 411.8 L614.4 421.1 L606.7 425.8ZM606.7 431 L614.4 426.3 L614.4 435.6 L606.7 440.3ZM606.7 445.5 L614.4 440.8 L614.4 450.1 L606.7 454.8ZM606.7 460 L614.4 455.3 L614.4 464.6 L606.7 469.3ZM606.7 474.4 L614.4 469.8 L614.4 479.1 L606.7 483.7Z" fill="#fff5c4" stroke="#ffd84a" stroke-width=".7"/><polygon points="483.3,424.1 533.5,450.6 533.5,548.9 483.3,520.8" fill="#ff8d00"/><path d="M487.4 436.9 L494.9 440.9 L494.9 450 L487.4 446ZM487.4 451 L494.9 455 L494.9 464.1 L487.4 460.1ZM487.4 465.1 L494.9 469.2 L494.9 478.3 L487.4 474.2ZM487.4 479.2 L494.9 483.3 L494.9 492.4 L487.4 488.3ZM487.4 493.4 L494.9 497.5 L494.9 506.6 L487.4 502.4ZM497.8 442.4 L505.3 446.4 L505.3 455.5 L497.8 451.5ZM497.8 456.6 L505.3 460.6 L505.3 469.7 L497.8 465.7ZM497.8 470.7 L505.3 474.8 L505.3 483.9 L497.8 479.9ZM497.8 484.9 L505.3 489 L505.3 498.1 L497.8 494ZM497.8 499.1 L505.3 503.2 L505.3 512.3 L497.8 508.2ZM508.2 447.9 L515.7 451.9 L515.7 461.1 L508.2 457.1ZM508.2 462.1 L515.7 466.2 L515.7 475.3 L508.2 471.3ZM508.2 476.4 L515.7 480.4 L515.7 489.6 L508.2 485.5ZM508.2 490.6 L515.7 494.7 L515.7 503.8 L508.2 499.7ZM508.2 504.8 L515.7 508.9 L515.7 518.1 L508.2 513.9ZM518.6 453.5 L526.1 457.4 L526.1 466.6 L518.6 462.6ZM518.6 467.7 L526.1 471.7 L526.1 480.9 L518.6 476.9ZM518.6 482 L526.1 486 L526.1 495.2 L518.6 491.2ZM518.6 496.3 L526.1 500.3 L526.1 509.5 L518.6 505.4ZM518.6 510.5 L526.1 514.6 L526.1 523.8 L518.6 519.7Z" fill="#fff5c4" stroke="#ffd84a" stroke-width=".7"/><path d="M483.3 424.1 L533.5 450.6 L618.2 398.6 L568 372.1 L520.3 401.4 L548.5 416.3 L518.9 434.4 L511.7 430.6 L534.3 416.8 L513.3 405.7ZM551 407.9 L558.6 411.9 L592.5 391.1 L584.9 387.1Z" fill="#ffd600" fill-rule="evenodd"/><path d="M504.5 211.9C504.5 207.6 503.9 209.4 506.5 205.9C509.1 202.4 508.1 204 512.4 201.5C516.7 199 514.8 200.1 519.4 198.5C524 196.9 521.7 196.6 526.3 196.8C530.9 197 529 196.6 533.3 199C537.6 201.4 535.7 199.9 539.2 203.9C542.7 207.9 540.4 206.9 543.7 210.9C547 214.9 544.7 211.5 549.1 215.8C553.5 220.1 552.9 218.5 557 223.8C561.1 229.1 559.7 226.8 561.5 231.7C563.3 236.6 563.3 234.3 562.5 238.6C561.7 242.9 562.8 241.6 559 244.6C555.2 247.6 556.4 247.3 551.1 247.6C545.8 247.9 549.1 247.9 543.2 245.6C537.3 243.3 540.3 244.6 533.3 240.6C526.3 236.6 529.3 238.7 522.3 233.7C515.3 228.7 517.7 230.7 512.4 225.7C507.1 220.7 509.1 223.4 506.5 218.8C503.9 214.2 504.5 216.2 504.5 211.9Z" fill="#e2ecec"/><path d="M504.5 211.9C504.5 207.6 503.9 209.4 506.5 205.9C509.1 202.4 508.1 204 512.4 201.5C516.7 199 514.8 200.1 519.4 198.5C524 196.9 521.7 196.6 526.3 196.8C530.9 197 529 196.6 533.3 199C537.6 201.4 535.7 199.9 539.2 203.9C542.7 207.9 540.4 206.9 543.7 210.9C547 214.9 544.7 211.5 549.1 215.8C553.5 220.1 552.9 218.5 557 223.8C561.1 229.1 559.7 226.8 561.5 231.7C563.3 236.6 563.3 234.3 562.5 238.6C561.7 242.9 562.8 241.6 559 244.6C555.2 247.6 556.4 247.3 551.1 247.6C545.8 247.9 549.1 247.9 543.2 245.6C537.3 243.3 540.3 244.6 533.3 240.6C526.3 236.6 529.3 238.7 522.3 233.7C515.3 228.7 517.7 230.7 512.4 225.7C507.1 220.7 509.1 223.4 506.5 218.8C503.9 214.2 504.5 216.2 504.5 211.9Z" fill="#fff" transform="translate(-1.7 1.2)"/><path d="M232.4 297.1C232.4 293.5 231.9 295 234.1 292.1C236.3 289.2 235.4 290.5 239 288.4C242.6 286.4 241 287.2 244.9 285.9C248.7 284.6 246.8 284.4 250.6 284.5C254.5 284.6 252.9 284.4 256.5 286.3C260.1 288.3 258.5 287.1 261.4 290.4C264.3 293.8 262.4 293 265.2 296.3C267.9 299.6 266 296.8 269.7 300.4C273.4 304 272.8 302.6 276.3 307.1C279.7 311.5 278.5 309.6 280.1 313.7C281.6 317.8 281.6 315.8 280.9 319.4C280.2 323 281.1 322 278 324.5C274.8 327 275.8 326.7 271.4 327C267 327.2 269.7 327.2 264.8 325.3C259.8 323.3 262.3 324.4 256.5 321.1C250.7 317.8 253.1 319.5 247.3 315.3C241.5 311.2 243.4 312.8 239 308.7C234.6 304.5 236.3 306.7 234.1 302.9C231.9 299 232.4 300.7 232.4 297.1Z" fill="#e2ecec"/><path d="M232.4 297.1C232.4 293.5 231.9 295 234.1 292.1C236.3 289.2 235.4 290.5 239 288.4C242.6 286.4 241 287.2 244.9 285.9C248.7 284.6 246.8 284.4 250.6 284.5C254.5 284.6 252.9 284.4 256.5 286.3C260.1 288.3 258.5 287.1 261.4 290.4C264.3 293.8 262.4 293 265.2 296.3C267.9 299.6 266 296.8 269.7 300.4C273.4 304 272.8 302.6 276.3 307.1C279.7 311.5 278.5 309.6 280.1 313.7C281.6 317.8 281.6 315.8 280.9 319.4C280.2 323 281.1 322 278 324.5C274.8 327 275.8 326.7 271.4 327C267 327.2 269.7 327.2 264.8 325.3C259.8 323.3 262.3 324.4 256.5 321.1C250.7 317.8 253.1 319.5 247.3 315.3C241.5 311.2 243.4 312.8 239 308.7C234.6 304.5 236.3 306.7 234.1 302.9C231.9 299 232.4 300.7 232.4 297.1Z" fill="#fff" transform="translate(-1.4 1)"/><path d="M431.9 299C431.9 296.5 431.5 297.5 433.1 295.5C434.6 293.5 434 294.4 436.5 292.9C439 291.5 437.9 292.1 440.5 291.2C443.2 290.3 441.9 290.1 444.5 290.2C447.2 290.3 446.1 290.1 448.6 291.5C451.1 292.8 450 292 452 294.3C454 296.6 452.7 296.1 454.6 298.4C456.5 300.7 455.2 298.7 457.8 301.2C460.3 303.7 460 302.8 462.3 305.9C464.7 308.9 463.9 307.6 465 310.4C466 313.3 466 311.9 465.5 314.4C465.1 316.9 465.7 316.2 463.5 317.9C461.3 319.7 462 319.5 458.9 319.7C455.9 319.9 457.8 319.9 454.3 318.5C450.9 317.2 452.6 317.9 448.6 315.6C444.6 313.3 446.3 314.5 442.2 311.6C438.2 308.7 439.5 309.8 436.5 307C433.4 304.1 434.6 305.6 433.1 303C431.5 300.3 431.9 301.5 431.9 299Z" fill="#e2ecec"/><path d="M431.9 299C431.9 296.5 431.5 297.5 433.1 295.5C434.6 293.5 434 294.4 436.5 292.9C439 291.5 437.9 292.1 440.5 291.2C443.2 290.3 441.9 290.1 444.5 290.2C447.2 290.3 446.1 290.1 448.6 291.5C451.1 292.8 450 292 452 294.3C454 296.6 452.7 296.1 454.6 298.4C456.5 300.7 455.2 298.7 457.8 301.2C460.3 303.7 460 302.8 462.3 305.9C464.7 308.9 463.9 307.6 465 310.4C466 313.3 466 311.9 465.5 314.4C465.1 316.9 465.7 316.2 463.5 317.9C461.3 319.7 462 319.5 458.9 319.7C455.9 319.9 457.8 319.9 454.3 318.5C450.9 317.2 452.6 317.9 448.6 315.6C444.6 313.3 446.3 314.5 442.2 311.6C438.2 308.7 439.5 309.8 436.5 307C433.4 304.1 434.6 305.6 433.1 303C431.5 300.3 431.9 301.5 431.9 299Z" fill="#fff" transform="translate(-1 0.7)"/><path d="M515.4 334.9C515.4 331.3 514.9 332.8 517.1 329.8C519.3 326.9 518.5 328.2 522.1 326.1C525.8 324 524.1 324.9 528.1 323.5C532 322.2 530 322 533.9 322.1C537.9 322.2 536.2 322 539.9 324C543.5 326 541.9 324.8 544.9 328.1C547.8 331.5 545.9 330.7 548.7 334.1C551.5 337.5 549.5 334.6 553.3 338.2C557.1 341.9 556.5 340.5 560 345.1C563.5 349.6 562.3 347.6 563.9 351.8C565.4 356 565.4 354 564.7 357.6C564 361.3 565 360.2 561.7 362.7C558.5 365.3 559.5 365 555 365.3C550.5 365.6 553.3 365.6 548.3 363.6C543.3 361.6 545.8 362.7 539.9 359.3C534 356 536.5 357.7 530.5 353.5C524.6 349.2 526.6 350.9 522.1 346.7C517.6 342.4 519.3 344.7 517.1 340.8C514.9 336.9 515.4 338.6 515.4 334.9Z" fill="#e2ecec"/><path d="M515.4 334.9C515.4 331.3 514.9 332.8 517.1 329.8C519.3 326.9 518.5 328.2 522.1 326.1C525.8 324 524.1 324.9 528.1 323.5C532 322.2 530 322 533.9 322.1C537.9 322.2 536.2 322 539.9 324C543.5 326 541.9 324.8 544.9 328.1C547.8 331.5 545.9 330.7 548.7 334.1C551.5 337.5 549.5 334.6 553.3 338.2C557.1 341.9 556.5 340.5 560 345.1C563.5 349.6 562.3 347.6 563.9 351.8C565.4 356 565.4 354 564.7 357.6C564 361.3 565 360.2 561.7 362.7C558.5 365.3 559.5 365 555 365.3C550.5 365.6 553.3 365.6 548.3 363.6C543.3 361.6 545.8 362.7 539.9 359.3C534 356 536.5 357.7 530.5 353.5C524.6 349.2 526.6 350.9 522.1 346.7C517.6 342.4 519.3 344.7 517.1 340.8C514.9 336.9 515.4 338.6 515.4 334.9Z" fill="#fff" transform="translate(-1.4 1)"/><path d="M412.3 371.1C412.3 368.7 411.9 369.7 413.4 367.8C414.9 365.8 414.3 366.7 416.7 365.3C419.1 363.9 418 364.5 420.6 363.6C423.1 362.8 421.8 362.6 424.4 362.7C427 362.8 425.9 362.6 428.3 363.9C430.7 365.2 429.6 364.4 431.6 366.6C433.5 368.8 432.2 368.3 434.1 370.5C435.9 372.7 434.6 370.9 437.1 373.2C439.5 375.6 439.1 374.7 441.4 377.7C443.7 380.6 442.9 379.3 443.9 382.1C445 384.8 445 383.5 444.5 385.9C444 388.3 444.7 387.6 442.5 389.2C440.4 390.9 441.1 390.7 438.2 390.9C435.2 391.1 437.1 391.1 433.8 389.8C430.5 388.5 432.2 389.2 428.3 387C424.4 384.8 426 385.9 422.2 383.2C418.3 380.4 419.6 381.5 416.7 378.7C413.8 376 414.9 377.5 413.4 374.9C411.9 372.4 412.3 373.5 412.3 371.1Z" fill="#e2ecec"/><path d="M412.3 371.1C412.3 368.7 411.9 369.7 413.4 367.8C414.9 365.8 414.3 366.7 416.7 365.3C419.1 363.9 418 364.5 420.6 363.6C423.1 362.8 421.8 362.6 424.4 362.7C427 362.8 425.9 362.6 428.3 363.9C430.7 365.2 429.6 364.4 431.6 366.6C433.5 368.8 432.2 368.3 434.1 370.5C435.9 372.7 434.6 370.9 437.1 373.2C439.5 375.6 439.1 374.7 441.4 377.7C443.7 380.6 442.9 379.3 443.9 382.1C445 384.8 445 383.5 444.5 385.9C444 388.3 444.7 387.6 442.5 389.2C440.4 390.9 441.1 390.7 438.2 390.9C435.2 391.1 437.1 391.1 433.8 389.8C430.5 388.5 432.2 389.2 428.3 387C424.4 384.8 426 385.9 422.2 383.2C418.3 380.4 419.6 381.5 416.7 378.7C413.8 376 414.9 377.5 413.4 374.9C411.9 372.4 412.3 373.5 412.3 371.1Z" fill="#fff" transform="translate(-0.9 0.7)"/></svg><div style="position:absolute;left:945px;top:67px;width:291px;height:12px;background:linear-gradient(#3a3a3a,#2f2f2f);"></div><svg style="position:absolute;left:971px;top:70.5px;" width="8" height="6" viewBox="0 0 8 6"><path d="M3.500 0L0 3 3.500 6zM7.500 0L4 3l3.500 3z" fill="#cfcfcf"/></svg><svg style="position:absolute;left:1223px;top:70.5px;" width="8" height="6" viewBox="0 0 8 6"><path d="M0 0l3.500 3L0 6zM4 0l3.500 3L4 6z" fill="#cfcfcf"/></svg><div style="position:absolute;left:945px;top:79px;width:37px;height:762px;background:#535353;"></div><div style="position:absolute;left:982px;top:79px;width:3px;height:762px;background:#2d2d2d;"></div><div style="position:absolute;left:954px;top:83px;width:20px;height:2px;background:#3e3e3e;"></div><svg style="position:absolute;left:957px;top:93px;" width="17" height="18" viewBox="0 0 17 18"><rect x=".5" y=".5" width="5" height="4" fill="none" stroke="#c8c8c8" stroke-width="1.200"/><rect x=".5" y="6.500" width="5" height="4" fill="none" stroke="#c8c8c8" stroke-width="1.200"/><rect x="0" y="12" width="6" height="5" fill="#c8c8c8"/><path d="M9 15c5-1 6-8 2-11" fill="none" stroke="#c8c8c8" stroke-width="1.800"/><path d="M8 2l5 0-3 4z" fill="#c8c8c8"/></svg><svg style="position:absolute;left:957px;top:123.5px;" width="16" height="13.5" viewBox="0 0 16 13.5"><path d="M0 0l16 6.750-16 6.750z" fill="#c8c8c8"/></svg><div style="position:absolute;left:945px;top:146px;width:38px;height:1px;background:#3a3a3a;"></div><div style="position:absolute;left:945px;top:147px;width:38px;height:1px;background:#626262;"></div><div style="position:absolute;left:954px;top:152px;width:20px;height:2px;background:#3e3e3e;"></div><svg style="position:absolute;left:956px;top:163px;" width="17" height="17" viewBox="0 0 17 17"><circle cx="8.500" cy="8.500" r="8.500" fill="#c8c8c8"/><rect x="7" y="7" width="3" height="6.500" fill="#535353"/><rect x="6" y="12.500" width="5" height="1.500" fill="#535353"/><circle cx="8.500" cy="4.300" r="1.700" fill="#535353"/></svg><div style="position:absolute;left:945px;top:188px;width:38px;height:1px;background:#3a3a3a;"></div><div style="position:absolute;left:945px;top:189px;width:38px;height:1px;background:#626262;"></div><div style="position:absolute;left:954px;top:193px;width:20px;height:2px;background:#3e3e3e;"></div><div class="t" style="left:956px;top:201px;font-size:18px;line-height:22px;color:#c8c8c8">A</div><div style="position:absolute;left:970px;top:204px;width:1px;height:17px;background:#c8c8c8;"></div><div class="t" style="left:957.5px;top:229px;font-size:19px;line-height:22px;font-weight:bold;color:#c8c8c8">&para;</div><div style="position:absolute;left:945px;top:256px;width:38px;height:1px;background:#3a3a3a;"></div><div style="position:absolute;left:945px;top:257px;width:38px;height:1px;background:#626262;"></div><div style="position:absolute;left:985px;top:79px;width:251px;height:17px;background:linear-gradient(#3e3e3e,#363636);"></div><div style="position:absolute;left:985px;top:79px;width:37px;height:17px;background:#535353;border-right:1px solid #2e2e2e"></div><div class="t " style="left:993px;top:80px;font-size:11px;color:#e6e6e6;">属性</div><svg style="position:absolute;left:1217px;top:84px;" width="14" height="8" viewBox="0 0 14 8"><path d="M0 1h5L2.500 5z" fill="#d0d0d0"/><path d="M6 .5h8M6 3h8M6 5.500h8M6 8h8" stroke="#d0d0d0" stroke-width="1"/></svg><div style="position:absolute;left:985px;top:96px;width:251px;height:345px;background:#535353;"></div><div class="t " style="left:994px;top:105px;font-size:12px;color:#ececec;">无属性</div><div style="position:absolute;left:985px;top:130px;width:251px;height:1px;background:#3e3e3e;"></div><div style="position:absolute;left:985px;top:131px;width:251px;height:1px;background:#5f5f5f;"></div><div style="position:absolute;left:1220px;top:132px;width:16px;height:291px;background:linear-gradient(90deg,#3c3c3c,#444);"></div><div style="position:absolute;left:985px;top:424px;width:251px;height:1px;background:#3e3e3e;"></div><div style="position:absolute;left:985px;top:425px;width:251px;height:1px;background:#5d5d5d;"></div><svg style="position:absolute;left:1194px;top:427px;" width="12" height="12" viewBox="0 0 12 12"><path d="M.5 3.500h11M4 3V1.500h4V3M1.500 4.500l.8 7h7.400l.8-7M4 5v5.500M6 5v5.500M8 5v5.500" fill="none" stroke="#858585" stroke-width="1.100"/></svg><svg style="position:absolute;left:1224px;top:429px;" width="10" height="10" viewBox="0 0 10 10"><path d="M10 0v10H0z" fill="none"/><path d="M9.500 2v8M7 4.500V10M4.500 7v3M2 9v1" stroke="#6a6a6a"/></svg><div style="position:absolute;left:985px;top:441px;width:251px;height:3px;background:#2e2e2e;"></div><div style="position:absolute;left:985px;top:444px;width:251px;height:17px;background:linear-gradient(#3e3e3e,#363636);"></div><div style="position:absolute;left:985px;top:444px;width:39px;height:17px;background:#535353;border-right:1px solid #2e2e2e"></div><div class="t " style="left:993px;top:445px;font-size:11px;color:#ededed;">图层</div><div style="position:absolute;left:1060px;top:444px;width:1px;height:17px;background:#2e2e2e;"></div><div style="position:absolute;left:1096px;top:444px;width:1px;height:17px;background:#2e2e2e;"></div><div class="t " style="left:1031px;top:445px;font-size:11px;color:#9c9c9c;">通道</div><div class="t " style="left:1067px;top:445px;font-size:11px;color:#9c9c9c;">路径</div><svg style="position:absolute;left:1217px;top:449px;" width="14" height="8" viewBox="0 0 14 8"><path d="M0 1h5L2.500 5z" fill="#d0d0d0"/><path d="M6 .5h8M6 3h8M6 5.500h8M6 8h8" stroke="#d0d0d0" stroke-width="1"/></svg><div style="position:absolute;left:985px;top:461px;width:251px;height:380px;background:#535353;"></div><div style="position:absolute;left:989px;top:465px;width:68px;height:19px;border:1px solid #333;border-radius:3px;background:linear-gradient(#6c6c6c,#585858);box-shadow:inset 0 1px 0 #7c7c7c"></div><svg style="position:absolute;left:995px;top:469px;" width="11" height="11" viewBox="0 0 11 11"><circle cx="6.500" cy="4.500" r="3.300" fill="none" stroke="#e0e0e0" stroke-width="1.400"/><path d="M4 7L.8 10.200" stroke="#e0e0e0" stroke-width="1.800"/></svg><div class="t " style="left:1011px;top:467px;font-size:12px;color:#f0f0f0;">类型</div><svg style="position:absolute;left:1049px;top:471px;" width="6" height="9" viewBox="0 0 6 9"><path d="M0 3.500L3 0 6 3.500zM0 5.500L3 9 6 5.500z" fill="#e4e4e4"/></svg><svg style="position:absolute;left:1081px;top:468px;" width="15" height="13" viewBox="0 0 15 13"><rect x=".5" y=".5" width="14" height="12" fill="none" stroke="#c2c2c2"/><rect x="2.500" y="2.500" width="10" height="8" fill="#6a6a6a"/><path d="M3 10l3-4 2 2 2-3 2.500 5z" fill="#c2c2c2"/></svg><svg style="position:absolute;left:1105px;top:468px;" width="13" height="13" viewBox="0 0 13 13"><circle cx="6.500" cy="6.500" r="6" fill="#c2c2c2"/><path d="M2.500 10.500A5.600 5.600 0 0 0 10.500 2.500z" fill="#555"/></svg><div class="t" style="left:1130px;top:466px;font-size:15px;line-height:18px;font-family:'Liberation Serif',serif;font-weight:bold;color:#c2c2c2">T</div><svg style="position:absolute;left:1154px;top:469px;" width="12" height="11" viewBox="0 0 12 11"><rect x="1.500" y="1.500" width="9" height="8" fill="none" stroke="#c2c2c2" stroke-width="1"/><rect x="0" y="0" width="3" height="3" fill="#c2c2c2"/><rect x="9" y="0" width="3" height="3" fill="#c2c2c2"/><rect x="0" y="8" width="3" height="3" fill="#c2c2c2"/><rect x="9" y="8" width="3" height="3" fill="#c2c2c2"/></svg><svg style="position:absolute;left:1178px;top:468px;" width="12" height="13" viewBox="0 0 12 13"><path d="M4.500.5h4l3 3v9h-7z" fill="none" stroke="#c2c2c2"/><path d="M8.500.5v3h3" fill="none" stroke="#c2c2c2"/><rect x="0" y="6.500" width="6.500" height="6.500" fill="#c2c2c2"/></svg><div style="position:absolute;left:1212px;top:466px;width:7px;height:16px;border-radius:2px;background:linear-gradient(#8c8c8c 0,#777 45%,#3a3a3a 50%,#3a3a3a 100%);border:1px solid #3a3a3a"></div><div style="position:absolute;left:985px;top:488px;width:251px;height:1px;background:#444;"></div><div style="position:absolute;left:989px;top:493px;width:110px;height:19px;border:1px solid #333;border-radius:3px;background:linear-gradient(#6c6c6c,#585858);box-shadow:inset 0 1px 0 #7c7c7c"></div><div class="t " style="left:997px;top:495px;font-size:12px;color:#f0f0f0;">穿透</div><svg style="position:absolute;left:1090px;top:499px;" width="6" height="9" viewBox="0 0 6 9"><path d="M0 3.500L3 0 6 3.500zM0 5.500L3 9 6 5.500z" fill="#e4e4e4"/></svg><div class="t " style="left:1108px;top:495px;font-size:12px;color:#ededed;">不透明度:</div><div style="position:absolute;left:1166px;top:494px;width:35px;height:19px;background:#3a3a3a;border-radius:2px 0 0 2px;box-shadow:inset 0 1px 1px #2a2a2a"></div><div class="t " style="left:1169px;top:497px;font-size:11px;color:#f0f0f0;">100%</div><div style="position:absolute;left:1201px;top:494px;width:19px;height:17px;border:1px solid #333;border-radius:0 3px 3px 0;background:linear-gradient(#747474,#5c5c5c)"></div><svg style="position:absolute;left:1208px;top:502px;" width="7" height="4" viewBox="0 0 7 4"><path d="M0 0h7L3.500 4z" fill="#f0f0f0"/></svg><div style="position:absolute;left:985px;top:516px;width:251px;height:1px;background:#444;"></div><div class="t " style="left:992px;top:523px;font-size:12px;color:#ededed;">锁定:</div><svg style="position:absolute;left:1030px;top:526px;" width="11" height="11" viewBox="0 0 11 11"><rect width="11" height="11" fill="#777"/><path d="M0 0h3.700v3.700H0zM7.300 0H11v3.700H7.300zM3.700 3.700h3.600v3.600H3.700zM0 7.300h3.700V11H0zM7.300 7.300H11V11H7.300z" fill="#969696"/></svg><svg style="position:absolute;left:1049px;top:524px;" width="17" height="14" viewBox="0 0 17 14"><path d="M16 0l1 1-7 9-2.500-2zM7 8.500L9.500 11c-1 3-5 3-9 2.500 3-1 3-4 6.500-5z" fill="#8e8e8e"/></svg><svg style="position:absolute;left:1072px;top:525px;" width="13" height="13" viewBox="0 0 13 13"><path d="M6.500 0l2.500 3H7.300v2.700H10V4l3 2.500L10 9V7.300H7.300V10H9l-2.500 3L4 10h1.700V7.300H3V9L0 6.500 3 4v1.700h2.700V3H4z" fill="none" stroke="#909090" stroke-width=".9"/></svg><svg style="position:absolute;left:1096px;top:525px;" width="10" height="12" viewBox="0 0 10 12"><path d="M2 5V3.500a3 3 0 0 1 6 0V5" fill="none" stroke="#cfcfcf" stroke-width="1.600"/><rect x="0" y="5" width="10" height="7" rx="1" fill="#cfcfcf"/><rect x="4.300" y="7" width="1.400" height="3" fill="#555"/></svg><div class="t " style="left:1132px;top:523px;font-size:12px;color:#ededed;">填充:</div><div style="position:absolute;left:1166px;top:522px;width:35px;height:19px;background:#3a3a3a;border-radius:2px 0 0 2px;box-shadow:inset 0 1px 1px #2a2a2a"></div><div class="t " style="left:1169px;top:525px;font-size:11px;color:#f0f0f0;">100%</div><div style="position:absolute;left:1201px;top:522px;width:19px;height:17px;border:1px solid #333;border-radius:0 3px 3px 0;background:linear-gradient(#747474,#5c5c5c)"></div><svg style="position:absolute;left:1208px;top:530px;" width="7" height="4" viewBox="0 0 7 4"><path d="M0 0h7L3.500 4z" fill="#f0f0f0"/></svg><div style="position:absolute;left:985px;top:546px;width:237px;height:1px;background:#3a3a3a;"></div><div style="position:absolute;left:986px;top:569px;width:236px;height:1px;background:#3d3d3d;"></div><div style="position:absolute;left:994px;top:552px;width:11px;height:11px;border:1px solid #444;background:#4a4a4a"></div><svg style="position:absolute;left:1021px;top:553px;" width="6" height="10" viewBox="0 0 6 10"><path d="M0 0l6 5-6 5z" fill="#f2f2f2"/></svg><svg style="position:absolute;left:1033px;top:552px;" width="15" height="12" viewBox="0 0 15 12"><defs><linearGradient id="fg" x1="0" y1="0" x2="0" y2="1"><stop offset="0" stop-color="#d2d2d2"/><stop offset="1" stop-color="#a8a8a8"/></linearGradient></defs><path d="M0 1.500C0 .5.5 0 1.500 0H5l1.500 2H15v10H0z" fill="url(#fg)"/></svg><div class="t " style="left:1060px;top:551px;font-size:12px;color:#f2f2f2;">透视网格</div><div style="position:absolute;left:986px;top:592px;width:236px;height:1px;background:#3d3d3d;"></div><svg style="position:absolute;left:993px;top:577px;" width="15" height="9" viewBox="0 0 15 9"><path d="M.5 4.500C3 .5 12 .5 14.500 4.500 12 8.500 3 8.500.5 4.500z" fill="#bdbdbd" stroke="#8a8a8a" stroke-width=".8"/><circle cx="7.500" cy="4.300" r="2.700" fill="#4a4a4a"/><circle cx="6.800" cy="3.600" r=".9" fill="#ddd"/></svg><svg style="position:absolute;left:1021px;top:576px;" width="6" height="10" viewBox="0 0 6 10"><path d="M0 0l6 5-6 5z" fill="#f2f2f2"/></svg><svg style="position:absolute;left:1033px;top:575px;" width="15" height="12" viewBox="0 0 15 12"><defs><linearGradient id="fg" x1="0" y1="0" x2="0" y2="1"><stop offset="0" stop-color="#d2d2d2"/><stop offset="1" stop-color="#a8a8a8"/></linearGradient></defs><path d="M0 1.500C0 .5.5 0 1.500 0H5l1.500 2H15v10H0z" fill="url(#fg)"/></svg><div class="t " style="left:1060px;top:574px;font-size:12px;color:#f2f2f2;">云朵 副本<span class="la"> 4</span></div><div style="position:absolute;left:986px;top:615px;width:236px;height:1px;background:#3d3d3d;"></div><svg style="position:absolute;left:993px;top:600px;" width="15" height="9" viewBox="0 0 15 9"><path d="M.5 4.500C3 .5 12 .5 14.500 4.500 12 8.500 3 8.500.5 4.500z" fill="#bdbdbd" stroke="#8a8a8a" stroke-width=".8"/><circle cx="7.500" cy="4.300" r="2.700" fill="#4a4a4a"/><circle cx="6.800" cy="3.600" r=".9" fill="#ddd"/></svg><svg style="position:absolute;left:1021px;top:599px;" width="6" height="10" viewBox="0 0 6 10"><path d="M0 0l6 5-6 5z" fill="#f2f2f2"/></svg><svg style="position:absolute;left:1033px;top:598px;" width="15" height="12" viewBox="0 0 15 12"><defs><linearGradient id="fg" x1="0" y1="0" x2="0" y2="1"><stop offset="0" stop-color="#d2d2d2"/><stop offset="1" stop-color="#a8a8a8"/></linearGradient></defs><path d="M0 1.500C0 .5.5 0 1.500 0H5l1.500 2H15v10H0z" fill="url(#fg)"/></svg><div class="t " style="left:1060px;top:597px;font-size:12px;color:#f2f2f2;">云朵 副本<span class="la"> 2</span></div><div style="position:absolute;left:1016px;top:616px;width:206px;height:22px;background:#596a8a;"></div><div style="position:absolute;left:986px;top:638px;width:236px;height:1px;background:#3d3d3d;"></div><svg style="position:absolute;left:993px;top:623px;" width="15" height="9" viewBox="0 0 15 9"><path d="M.5 4.500C3 .5 12 .5 14.500 4.500 12 8.500 3 8.500.5 4.500z" fill="#bdbdbd" stroke="#8a8a8a" stroke-width=".8"/><circle cx="7.500" cy="4.300" r="2.700" fill="#4a4a4a"/><circle cx="6.800" cy="3.600" r=".9" fill="#ddd"/></svg><svg style="position:absolute;left:1021px;top:622px;" width="6" height="10" viewBox="0 0 6 10"><path d="M0 0l6 5-6 5z" fill="#f2f2f2"/></svg><svg style="position:absolute;left:1033px;top:621px;" width="15" height="12" viewBox="0 0 15 12"><defs><linearGradient id="fg" x1="0" y1="0" x2="0" y2="1"><stop offset="0" stop-color="#d2d2d2"/><stop offset="1" stop-color="#a8a8a8"/></linearGradient></defs><path d="M0 1.500C0 .5.5 0 1.500 0H5l1.500 2H15v10H0z" fill="url(#fg)"/></svg><div class="t " style="left:1060px;top:620px;font-size:12px;color:#f2f2f2;">云朵 副本<span class="la"> 3</span></div><div style="position:absolute;left:986px;top:661px;width:236px;height:1px;background:#3d3d3d;"></div><svg style="position:absolute;left:993px;top:646px;" width="15" height="9" viewBox="0 0 15 9"><path d="M.5 4.500C3 .5 12 .5 14.500 4.500 12 8.500 3 8.500.5 4.500z" fill="#bdbdbd" stroke="#8a8a8a" stroke-width=".8"/><circle cx="7.500" cy="4.300" r="2.700" fill="#4a4a4a"/><circle cx="6.800" cy="3.600" r=".9" fill="#ddd"/></svg><svg style="position:absolute;left:1021px;top:645px;" width="6" height="10" viewBox="0 0 6 10"><path d="M0 0l6 5-6 5z" fill="#f2f2f2"/></svg><svg style="position:absolute;left:1033px;top:644px;" width="15" height="12" viewBox="0 0 15 12"><defs><linearGradient id="fg" x1="0" y1="0" x2="0" y2="1"><stop offset="0" stop-color="#d2d2d2"/><stop offset="1" stop-color="#a8a8a8"/></linearGradient></defs><path d="M0 1.500C0 .5.5 0 1.500 0H5l1.500 2H15v10H0z" fill="url(#fg)"/></svg><div class="t " style="left:1060px;top:643px;font-size:12px;color:#f2f2f2;">云朵 副本</div><div style="position:absolute;left:986px;top:684px;width:236px;height:1px;background:#3d3d3d;"></div><svg style="position:absolute;left:993px;top:669px;" width="15" height="9" viewBox="0 0 15 9"><path d="M.5 4.500C3 .5 12 .5 14.500 4.500 12 8.500 3 8.500.5 4.500z" fill="#bdbdbd" stroke="#8a8a8a" stroke-width=".8"/><circle cx="7.500" cy="4.300" r="2.700" fill="#4a4a4a"/><circle cx="6.800" cy="3.600" r=".9" fill="#ddd"/></svg><svg style="position:absolute;left:1021px;top:668px;" width="6" height="10" viewBox="0 0 6 10"><path d="M0 0l6 5-6 5z" fill="#f2f2f2"/></svg><svg style="position:absolute;left:1033px;top:667px;" width="15" height="12" viewBox="0 0 15 12"><defs><linearGradient id="fg" x1="0" y1="0" x2="0" y2="1"><stop offset="0" stop-color="#d2d2d2"/><stop offset="1" stop-color="#a8a8a8"/></linearGradient></defs><path d="M0 1.500C0 .5.5 0 1.500 0H5l1.500 2H15v10H0z" fill="url(#fg)"/></svg><div class="t " style="left:1060px;top:666px;font-size:12px;color:#f2f2f2;">云朵</div><div style="position:absolute;left:986px;top:707px;width:236px;height:1px;background:#3d3d3d;"></div><svg style="position:absolute;left:993px;top:692px;" width="15" height="9" viewBox="0 0 15 9"><path d="M.5 4.500C3 .5 12 .5 14.500 4.500 12 8.500 3 8.500.5 4.500z" fill="#bdbdbd" stroke="#8a8a8a" stroke-width=".8"/><circle cx="7.500" cy="4.300" r="2.700" fill="#4a4a4a"/><circle cx="6.800" cy="3.600" r=".9" fill="#ddd"/></svg><svg style="position:absolute;left:1021px;top:691px;" width="6" height="10" viewBox="0 0 6 10"><path d="M0 0l6 5-6 5z" fill="#f2f2f2"/></svg><svg style="position:absolute;left:1033px;top:690px;" width="15" height="12" viewBox="0 0 15 12"><defs><linearGradient id="fg" x1="0" y1="0" x2="0" y2="1"><stop offset="0" stop-color="#d2d2d2"/><stop offset="1" stop-color="#a8a8a8"/></linearGradient></defs><path d="M0 1.500C0 .5.5 0 1.500 0H5l1.500 2H15v10H0z" fill="url(#fg)"/></svg><div class="t " style="left:1060px;top:689px;font-size:12px;color:#f2f2f2;"><span class="la">2019</span></div><div style="position:absolute;left:986px;top:730px;width:236px;height:1px;background:#3d3d3d;"></div><svg style="position:absolute;left:993px;top:715px;" width="15" height="9" viewBox="0 0 15 9"><path d="M.5 4.500C3 .5 12 .5 14.500 4.500 12 8.500 3 8.500.5 4.500z" fill="#bdbdbd" stroke="#8a8a8a" stroke-width=".8"/><circle cx="7.500" cy="4.300" r="2.700" fill="#4a4a4a"/><circle cx="6.800" cy="3.600" r=".9" fill="#ddd"/></svg><svg style="position:absolute;left:1021px;top:714px;" width="6" height="10" viewBox="0 0 6 10"><path d="M0 0l6 5-6 5z" fill="#f2f2f2"/></svg><svg style="position:absolute;left:1033px;top:713px;" width="15" height="12" viewBox="0 0 15 12"><defs><linearGradient id="fg" x1="0" y1="0" x2="0" y2="1"><stop offset="0" stop-color="#d2d2d2"/><stop offset="1" stop-color="#a8a8a8"/></linearGradient></defs><path d="M0 1.500C0 .5.5 0 1.500 0H5l1.500 2H15v10H0z" fill="url(#fg)"/></svg><div class="t " style="left:1060px;top:712px;font-size:12px;color:#f2f2f2;">广告牌</div><div style="position:absolute;left:986px;top:753px;width:236px;height:1px;background:#3d3d3d;"></div><svg style="position:absolute;left:993px;top:738px;" width="15" height="9" viewBox="0 0 15 9"><path d="M.5 4.500C3 .5 12 .5 14.500 4.500 12 8.500 3 8.500.5 4.500z" fill="#bdbdbd" stroke="#8a8a8a" stroke-width=".8"/><circle cx="7.500" cy="4.300" r="2.700" fill="#4a4a4a"/><circle cx="6.800" cy="3.600" r=".9" fill="#ddd"/></svg><svg style="position:absolute;left:1021px;top:737px;" width="6" height="10" viewBox="0 0 6 10"><path d="M0 0l6 5-6 5z" fill="#f2f2f2"/></svg><svg style="position:absolute;left:1033px;top:736px;" width="15" height="12" viewBox="0 0 15 12"><defs><linearGradient id="fg" x1="0" y1="0" x2="0" y2="1"><stop offset="0" stop-color="#d2d2d2"/><stop offset="1" stop-color="#a8a8a8"/></linearGradient></defs><path d="M0 1.500C0 .5.5 0 1.500 0H5l1.500 2H15v10H0z" fill="url(#fg)"/></svg><div class="t " style="left:1060px;top:735px;font-size:12px;color:#f2f2f2;">树</div><div style="position:absolute;left:986px;top:776px;width:236px;height:1px;background:#3d3d3d;"></div><svg style="position:absolute;left:993px;top:761px;" width="15" height="9" viewBox="0 0 15 9"><path d="M.5 4.500C3 .5 12 .5 14.500 4.500 12 8.500 3 8.500.5 4.500z" fill="#bdbdbd" stroke="#8a8a8a" stroke-width=".8"/><circle cx="7.500" cy="4.300" r="2.700" fill="#4a4a4a"/><circle cx="6.800" cy="3.600" r=".9" fill="#ddd"/></svg><svg style="position:absolute;left:1021px;top:760px;" width="6" height="10" viewBox="0 0 6 10"><path d="M0 0l6 5-6 5z" fill="#f2f2f2"/></svg><svg style="position:absolute;left:1033px;top:759px;" width="15" height="12" viewBox="0 0 15 12"><defs><linearGradient id="fg" x1="0" y1="0" x2="0" y2="1"><stop offset="0" stop-color="#d2d2d2"/><stop offset="1" stop-color="#a8a8a8"/></linearGradient></defs><path d="M0 1.500C0 .5.5 0 1.500 0H5l1.500 2H15v10H0z" fill="url(#fg)"/></svg><div class="t " style="left:1060px;top:758px;font-size:12px;color:#f2f2f2;">公路<span class="la">2</span></div><div style="position:absolute;left:986px;top:799px;width:236px;height:1px;background:#3d3d3d;"></div><svg style="position:absolute;left:993px;top:784px;" width="15" height="9" viewBox="0 0 15 9"><path d="M.5 4.500C3 .5 12 .5 14.500 4.500 12 8.500 3 8.500.5 4.500z" fill="#bdbdbd" stroke="#8a8a8a" stroke-width=".8"/><circle cx="7.500" cy="4.300" r="2.700" fill="#4a4a4a"/><circle cx="6.800" cy="3.600" r=".9" fill="#ddd"/></svg><svg style="position:absolute;left:1021px;top:783px;" width="6" height="10" viewBox="0 0 6 10"><path d="M0 0l6 5-6 5z" fill="#f2f2f2"/></svg><svg style="position:absolute;left:1033px;top:782px;" width="15" height="12" viewBox="0 0 15 12"><defs><linearGradient id="fg" x1="0" y1="0" x2="0" y2="1"><stop offset="0" stop-color="#d2d2d2"/><stop offset="1" stop-color="#a8a8a8"/></linearGradient></defs><path d="M0 1.500C0 .5.5 0 1.500 0H5l1.500 2H15v10H0z" fill="url(#fg)"/></svg><div class="t " style="left:1060px;top:781px;font-size:12px;color:#f2f2f2;">手机</div><div style="position:absolute;left:986px;top:822px;width:236px;height:1px;background:#3d3d3d;"></div><svg style="position:absolute;left:993px;top:807px;" width="15" height="9" viewBox="0 0 15 9"><path d="M.5 4.500C3 .5 12 .5 14.500 4.500 12 8.500 3 8.500.5 4.500z" fill="#bdbdbd" stroke="#8a8a8a" stroke-width=".8"/><circle cx="7.500" cy="4.300" r="2.700" fill="#4a4a4a"/><circle cx="6.800" cy="3.600" r=".9" fill="#ddd"/></svg><svg style="position:absolute;left:1021px;top:806px;" width="6" height="10" viewBox="0 0 6 10"><path d="M0 0l6 5-6 5z" fill="#f2f2f2"/></svg><svg style="position:absolute;left:1033px;top:805px;" width="15" height="12" viewBox="0 0 15 12"><defs><linearGradient id="fg" x1="0" y1="0" x2="0" y2="1"><stop offset="0" stop-color="#d2d2d2"/><stop offset="1" stop-color="#a8a8a8"/></linearGradient></defs><path d="M0 1.500C0 .5.5 0 1.500 0H5l1.500 2H15v10H0z" fill="url(#fg)"/></svg><div class="t " style="left:1060px;top:804px;font-size:12px;color:#f2f2f2;">公路</div><div style="position:absolute;left:1015px;top:547px;width:1px;height:276px;background:#3d3d3d;"></div><svg style="position:absolute;left:1193px;top:552px;" width="10" height="12" viewBox="0 0 10 12"><path d="M2 5V3.500a3 3 0 0 1 6 0V5" fill="none" stroke="#d6d6d6" stroke-width="1.600"/><rect x="0" y="5" width="10" height="7" rx="1" fill="#d6d6d6"/><rect x="4.300" y="7" width="1.400" height="3" fill="#555"/></svg><div style="position:absolute;left:1222px;top:547px;width:14px;height:276px;background:#444;"></div><svg style="position:absolute;left:1225px;top:553px;" width="7" height="4" viewBox="0 0 7 4"><path d="M0 4h7L3.500 0z" fill="#f0f0f0"/></svg><svg style="position:absolute;left:1225px;top:812px;" width="7" height="4" viewBox="0 0 7 4"><path d="M0 0h7L3.500 4z" fill="#f0f0f0"/></svg><div style="position:absolute;left:1223px;top:565px;width:12px;height:181px;border-radius:3px;background:linear-gradient(90deg,#7c7c7c,#6c6c6c)"></div><div style="position:absolute;left:985px;top:823px;width:251px;height:1px;background:#3a3a3a;"></div><div style="position:absolute;left:985px;top:824px;width:251px;height:17px;background:#535353;"></div><svg style="position:absolute;left:1032px;top:828px;" width="15" height="8" viewBox="0 0 15 8"><rect x=".8" y=".8" width="8" height="6.400" rx="3.200" fill="none" stroke="#8a8a8a" stroke-width="1.600"/><rect x="6.200" y=".8" width="8" height="6.400" rx="3.200" fill="none" stroke="#8a8a8a" stroke-width="1.600"/></svg><div class="t" style="left:1061px;top:823px;font-size:14px;line-height:16px;font-style:italic;font-family:'Liberation Serif',serif;color:#c4c4c4">fx</div><svg style="position:absolute;left:1075px;top:836px;" width="4" height="3" viewBox="0 0 4 3"><path d="M0 0h4L2 3z" fill="#c4c4c4"/></svg><svg style="position:absolute;left:1087px;top:827px;" width="14" height="11" viewBox="0 0 14 11"><rect width="14" height="11" fill="#c4c4c4"/><circle cx="7" cy="5.500" r="3" fill="#535353"/></svg><svg style="position:absolute;left:1115px;top:826px;" width="13" height="13" viewBox="0 0 13 13"><circle cx="6.500" cy="6.500" r="6" fill="#c4c4c4"/><path d="M2.500 10.500A5.600 5.600 0 0 0 10.500 2.500z" fill="#4f4f4f"/></svg><svg style="position:absolute;left:1129px;top:836px;" width="4" height="3" viewBox="0 0 4 3"><path d="M0 0h4L2 3z" fill="#c4c4c4"/></svg><svg style="position:absolute;left:1141px;top:827px;" width="14" height="11" viewBox="0 0 14 11"><path d="M0 1C0 .5.500 0 1 0h4l1.500 2H14v9H0z" fill="#c4c4c4"/></svg><svg style="position:absolute;left:1168px;top:827px;" width="12" height="12" viewBox="0 0 12 12"><path d="M0 0h12v12H5L0 7z" fill="#c4c4c4"/><path d="M0 7h5v5z" fill="#535353" stroke="#c4c4c4" stroke-width=".8"/></svg><svg style="position:absolute;left:1194px;top:826px;" width="12" height="13" viewBox="0 0 12 13"><path d="M.5 3.500h11M4 3V1.500h4V3M1.500 4.500l.8 8h7.400l.8-8M4 5.500v6M6 5.500v6M8 5.500v6" fill="none" stroke="#c4c4c4" stroke-width="1.100"/></svg><div style="position:absolute;left:1236px;top:33px;width:1px;height:809px;background:#2a2a2a;"></div></div></body></html>
